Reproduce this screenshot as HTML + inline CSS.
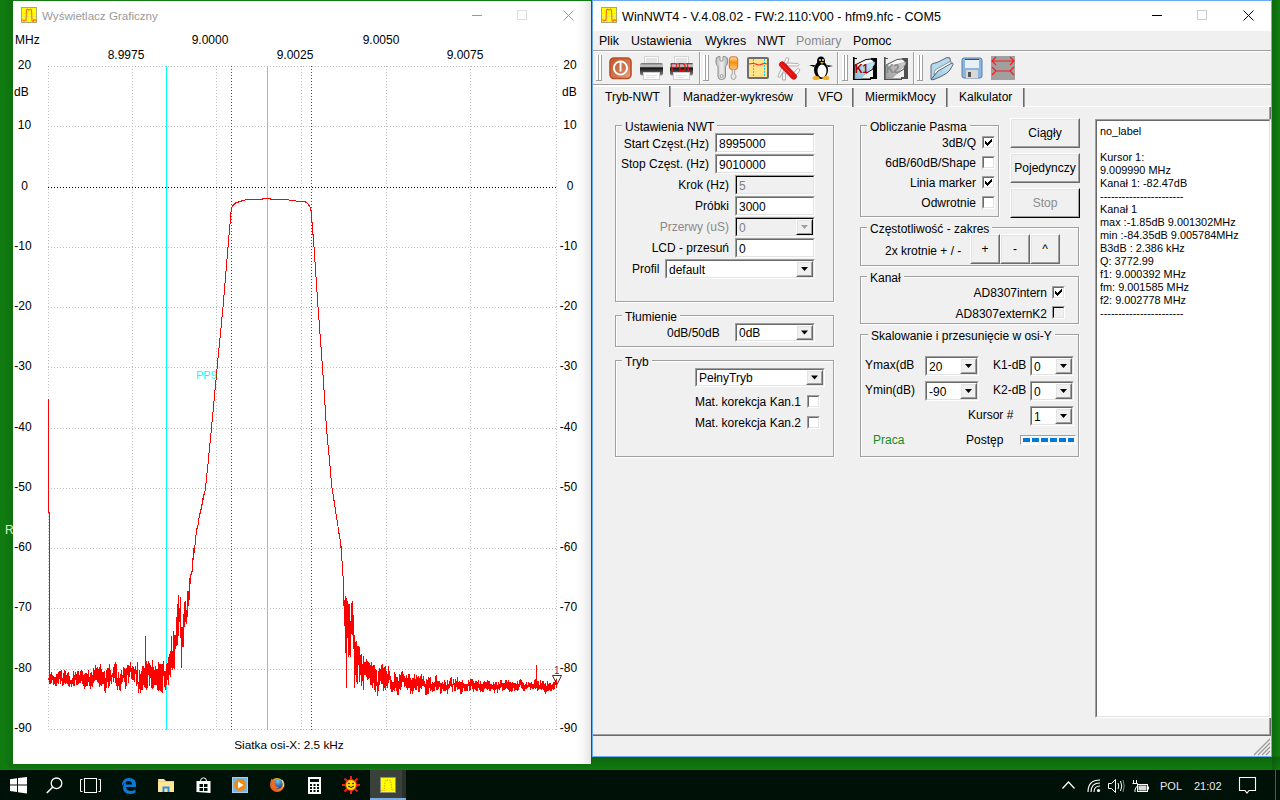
<!DOCTYPE html><html><head><meta charset="utf-8"><style>
html,body{margin:0;padding:0;}
body{width:1280px;height:800px;position:relative;overflow:hidden;background:#107c10;font-family:"Liberation Sans", sans-serif;}
div{box-sizing:border-box;}
svg{position:absolute;overflow:visible;}
</style></head><body><div style="position:absolute;left:4px;top:0px;width:9px;height:764px;background:linear-gradient(to right, rgba(0,0,0,0), rgba(0,0,0,0.10));"></div><div style="position:absolute;left:8px;top:764px;width:583px;height:6px;background:linear-gradient(to bottom, rgba(0,0,0,0.12), rgba(0,0,0,0));"></div><div style="position:absolute;left:13px;top:1px;width:578px;height:763px;background:#fff;"></div><div style="position:absolute;left:575px;top:1px;width:16px;height:763px;background:linear-gradient(to right, rgba(0,0,0,0) 0%, rgba(0,0,0,0.03) 50%, rgba(0,0,0,0.10) 100%);"></div><svg style="left:21px;top:7px" width="16" height="16"><rect x="0.5" y="0.5" width="15" height="15" fill="#ffff00" stroke="#a8a878"/><path d="M1 6.5 H15 M1 9.5 H15 M5.5 1 V15 M10.5 1 V15" stroke="#d8d8a0" stroke-width="0.6"/><path d="M0.5 13.2 L2 12.8 L3 14 L4.2 13 L5 13.2 L5.5 3 L6.5 2.2 L8 3.2 L9.5 2.2 L10.5 3 L11 13.5 L12.3 14.5 L13 12.5 L14.5 13.5 L15.5 12.8" stroke="#ff7010" fill="none" stroke-width="1.1"/></svg><div style="position:absolute;left:42px;top:9.00px;font-size:11.6px;line-height:13.33px;color:#999;white-space:pre;">Wyświetlacz Graficzny</div><div style="position:absolute;left:472px;top:15px;width:10px;height:1px;background:#999;"></div><div style="position:absolute;left:517px;top:10px;width:10px;height:10px;border:1px solid #ddd;"></div><svg style="left:563px;top:10px" width="11" height="11"><path d="M0.5 0.5 L10.5 10.5 M10.5 0.5 L0.5 10.5" stroke="#999" stroke-width="1"/></svg><svg style="left:0;top:0" width="1280" height="800" shape-rendering="crispEdges"><line x1="48" y1="66.5" x2="557" y2="66.5" stroke="#c0c0c0" stroke-dasharray="1 2"/><line x1="48" y1="126.5" x2="557" y2="126.5" stroke="#c0c0c0" stroke-dasharray="1 2"/><line x1="48" y1="187.5" x2="557" y2="187.5" stroke="#000" stroke-dasharray="1 2"/><line x1="48" y1="247.5" x2="557" y2="247.5" stroke="#c0c0c0" stroke-dasharray="1 2"/><line x1="48" y1="307.5" x2="557" y2="307.5" stroke="#c0c0c0" stroke-dasharray="1 2"/><line x1="48" y1="367.5" x2="557" y2="367.5" stroke="#c0c0c0" stroke-dasharray="1 2"/><line x1="48" y1="428.5" x2="557" y2="428.5" stroke="#c0c0c0" stroke-dasharray="1 2"/><line x1="48" y1="488.5" x2="557" y2="488.5" stroke="#c0c0c0" stroke-dasharray="1 2"/><line x1="48" y1="548.5" x2="557" y2="548.5" stroke="#c0c0c0" stroke-dasharray="1 2"/><line x1="48" y1="608.5" x2="557" y2="608.5" stroke="#c0c0c0" stroke-dasharray="1 2"/><line x1="48" y1="669.5" x2="557" y2="669.5" stroke="#c0c0c0" stroke-dasharray="1 2"/><line x1="48" y1="729.5" x2="557" y2="729.5" stroke="#c0c0c0" stroke-dasharray="1 2"/><line x1="48.5" y1="66" x2="48.5" y2="730" stroke="#c0c0c0" stroke-dasharray="1 2"/><line x1="132.5" y1="66" x2="132.5" y2="730" stroke="#c0c0c0" stroke-dasharray="1 2"/><line x1="216.5" y1="66" x2="216.5" y2="730" stroke="#c0c0c0" stroke-dasharray="1 2"/><line x1="301.5" y1="66" x2="301.5" y2="730" stroke="#c0c0c0" stroke-dasharray="1 2"/><line x1="386.5" y1="66" x2="386.5" y2="730" stroke="#c0c0c0" stroke-dasharray="1 2"/><line x1="470.5" y1="66" x2="470.5" y2="730" stroke="#c0c0c0" stroke-dasharray="1 2"/><line x1="556.5" y1="66" x2="556.5" y2="730" stroke="#c0c0c0" stroke-dasharray="1 2"/><line x1="231.5" y1="66" x2="231.5" y2="730" stroke="#ff0000" stroke-dasharray="1 2"/><line x1="311.5" y1="66" x2="311.5" y2="730" stroke="#ff0000" stroke-dasharray="1 2"/><line x1="166.5" y1="66" x2="166.5" y2="730" stroke="#00ffff" stroke-width="1"/><line x1="267.5" y1="66" x2="267.5" y2="730" stroke="#00ffff" stroke-width="1"/><path d="M48.5 399 L48.5 512.5 L49.5 513 L49.5 680 L49.00 679.4 L49.17 682.2 L49.34 679.2 L49.51 678.6 L49.68 676.0 L49.85 678.6 L50.02 683.6 L50.19 680.8 L50.36 683.2 L50.53 680.2 L50.70 680.8 L50.87 680.2 L51.04 673.1 L51.21 683.0 L51.38 681.7 L51.55 681.6 L51.72 673.0 L51.89 672.8 L52.06 675.6 L52.23 677.0 L52.40 679.7 L52.57 678.1 L52.74 680.2 L52.91 675.5 L53.08 679.3 L53.25 679.7 L53.42 675.8 L53.59 685.4 L53.76 681.4 L53.93 684.4 L54.10 677.6 L54.27 677.5 L54.44 679.4 L54.61 680.6 L54.78 683.7 L54.95 682.2 L55.12 679.3 L55.29 677.2 L55.46 678.7 L55.63 685.5 L55.80 677.2 L55.97 681.3 L56.14 682.0 L56.31 674.3 L56.48 680.6 L56.65 685.7 L56.82 673.9 L56.99 679.3 L57.16 680.2 L57.33 677.3 L57.50 682.5 L57.67 679.9 L57.84 673.9 L58.01 682.7 L58.18 681.6 L58.35 682.2 L58.52 683.7 L58.69 678.8 L58.86 677.5 L59.03 671.4 L59.20 679.1 L59.37 674.0 L59.54 674.7 L59.71 671.6 L59.88 673.0 L60.05 675.1 L60.22 682.8 L60.39 670.9 L60.56 671.9 L60.73 678.9 L60.90 683.9 L61.07 680.3 L61.24 670.9 L61.41 670.8 L61.58 679.1 L61.75 674.5 L61.92 673.0 L62.09 681.8 L62.26 682.5 L62.43 678.8 L62.60 679.5 L62.77 680.7 L62.94 685.8 L63.11 682.1 L63.28 681.8 L63.45 682.1 L63.62 673.2 L63.79 685.0 L63.96 683.3 L64.13 681.2 L64.30 671.6 L64.47 675.5 L64.64 681.3 L64.81 670.4 L64.98 676.4 L65.15 681.3 L65.32 671.4 L65.49 683.8 L65.66 679.5 L65.83 676.7 L66.00 678.9 L66.17 680.5 L66.34 678.4 L66.51 682.9 L66.68 675.3 L66.85 676.3 L67.02 682.5 L67.19 678.0 L67.36 674.1 L67.53 681.8 L67.70 684.0 L67.87 676.0 L68.04 672.2 L68.21 677.8 L68.38 678.1 L68.55 678.0 L68.72 685.9 L68.89 675.9 L69.06 686.3 L69.23 675.8 L69.40 678.2 L69.57 684.6 L69.74 686.8 L69.91 685.6 L70.08 683.2 L70.25 682.0 L70.42 681.8 L70.59 683.3 L70.76 679.7 L70.93 681.4 L71.10 682.5 L71.27 679.9 L71.44 683.2 L71.61 682.4 L71.78 687.3 L71.95 681.4 L72.12 678.2 L72.29 678.3 L72.46 679.8 L72.63 683.7 L72.80 677.9 L72.97 680.7 L73.14 685.9 L73.31 670.8 L73.48 672.8 L73.65 678.5 L73.82 679.0 L73.99 678.2 L74.16 675.2 L74.33 680.2 L74.50 678.8 L74.67 675.6 L74.84 685.7 L75.01 680.3 L75.18 676.7 L75.35 679.0 L75.52 678.6 L75.69 679.5 L75.86 672.3 L76.03 677.5 L76.20 684.0 L76.37 674.0 L76.54 678.7 L76.71 683.1 L76.88 682.5 L77.05 685.2 L77.22 671.0 L77.39 677.0 L77.56 677.1 L77.73 681.6 L77.90 683.8 L78.07 671.4 L78.24 683.9 L78.41 672.3 L78.58 681.7 L78.75 671.5 L78.92 678.7 L79.09 682.8 L79.26 676.2 L79.43 677.2 L79.60 679.5 L79.77 676.2 L79.94 674.9 L80.11 682.2 L80.28 680.0 L80.45 674.0 L80.62 683.3 L80.79 670.7 L80.96 680.6 L81.13 675.5 L81.30 677.7 L81.47 680.7 L81.64 678.6 L81.81 680.7 L81.98 670.8 L82.15 670.9 L82.32 680.7 L82.49 673.4 L82.66 673.1 L82.83 671.2 L83.00 684.1 L83.17 681.9 L83.34 685.7 L83.51 674.9 L83.68 679.8 L83.85 674.9 L84.02 684.2 L84.19 688.4 L84.36 677.0 L84.53 688.5 L84.70 685.7 L84.87 680.0 L85.04 672.7 L85.21 686.7 L85.38 679.2 L85.55 676.4 L85.72 680.7 L85.89 680.4 L86.06 685.4 L86.23 673.4 L86.40 683.6 L86.57 685.4 L86.74 685.4 L86.91 677.9 L87.08 675.4 L87.25 683.9 L87.42 679.7 L87.59 679.8 L87.76 685.9 L87.93 677.7 L88.10 670.9 L88.27 676.7 L88.44 670.5 L88.61 682.2 L88.78 679.8 L88.95 675.5 L89.12 678.6 L89.29 682.9 L89.46 679.7 L89.63 686.2 L89.80 680.0 L89.97 685.8 L90.14 688.4 L90.31 689.3 L90.48 678.3 L90.65 685.9 L90.82 673.3 L90.99 675.8 L91.16 672.5 L91.33 685.6 L91.50 673.6 L91.67 679.3 L91.84 678.0 L92.01 678.5 L92.18 675.3 L92.35 679.4 L92.52 686.7 L92.69 678.3 L92.86 680.8 L93.03 683.2 L93.20 676.9 L93.37 671.0 L93.54 674.5 L93.71 682.7 L93.88 667.7 L94.05 672.8 L94.22 680.9 L94.39 679.2 L94.56 674.5 L94.73 678.6 L94.90 674.9 L95.07 667.5 L95.24 665.5 L95.41 671.0 L95.58 680.2 L95.75 672.4 L95.92 671.0 L96.09 672.3 L96.26 668.4 L96.43 676.9 L96.60 671.0 L96.77 680.0 L96.94 668.2 L97.11 679.7 L97.28 673.8 L97.45 667.6 L97.62 681.5 L97.79 675.5 L97.96 667.2 L98.13 671.9 L98.30 679.1 L98.47 674.8 L98.64 682.6 L98.81 682.7 L98.98 682.5 L99.15 680.6 L99.32 686.8 L99.49 682.5 L99.66 680.9 L99.83 667.3 L100.00 682.7 L100.17 684.7 L100.34 674.1 L100.51 672.5 L100.68 685.4 L100.85 664.3 L101.02 677.5 L101.19 685.1 L101.36 669.2 L101.53 679.7 L101.70 686.4 L101.87 675.7 L102.04 680.6 L102.21 683.3 L102.38 672.4 L102.55 677.8 L102.72 680.4 L102.89 683.9 L103.06 678.5 L103.23 677.4 L103.40 672.2 L103.57 676.4 L103.74 684.4 L103.91 679.6 L104.08 673.9 L104.25 674.4 L104.42 690.7 L104.59 687.9 L104.76 685.2 L104.93 671.2 L105.10 686.0 L105.27 685.2 L105.44 692.7 L105.61 684.7 L105.78 681.1 L105.95 684.3 L106.12 669.8 L106.29 686.1 L106.46 680.9 L106.63 673.7 L106.80 685.9 L106.97 687.6 L107.14 667.8 L107.31 672.3 L107.48 678.4 L107.65 677.8 L107.82 674.2 L107.99 670.7 L108.16 687.6 L108.33 683.6 L108.50 669.2 L108.67 668.1 L108.84 687.0 L109.01 682.3 L109.18 686.3 L109.35 680.5 L109.52 669.4 L109.69 676.5 L109.86 664.2 L110.03 670.3 L110.20 675.0 L110.37 679.2 L110.54 671.8 L110.71 676.3 L110.88 680.6 L111.05 680.6 L111.22 682.7 L111.39 680.2 L111.56 676.8 L111.73 683.8 L111.90 678.7 L112.07 672.7 L112.24 673.4 L112.41 676.9 L112.58 675.6 L112.75 676.9 L112.92 675.5 L113.09 676.4 L113.26 674.3 L113.43 667.1 L113.60 678.0 L113.77 682.2 L113.94 678.3 L114.11 674.3 L114.28 678.3 L114.45 669.0 L114.62 664.2 L114.79 675.0 L114.96 668.1 L115.13 678.4 L115.30 666.1 L115.47 662.0 L115.64 665.8 L115.81 682.8 L115.98 670.2 L116.15 664.1 L116.32 668.6 L116.49 677.7 L116.66 678.3 L116.83 677.0 L117.00 686.4 L117.17 682.0 L117.34 677.9 L117.51 682.3 L117.68 689.5 L117.85 685.2 L118.02 685.5 L118.19 671.7 L118.36 677.7 L118.53 683.3 L118.70 676.5 L118.87 685.5 L119.04 682.5 L119.21 684.8 L119.38 677.8 L119.55 690.4 L119.72 688.0 L119.89 678.7 L120.06 680.9 L120.23 691.3 L120.40 677.9 L120.57 685.6 L120.74 685.8 L120.91 678.8 L121.08 670.4 L121.25 678.6 L121.42 679.1 L121.59 683.6 L121.76 680.9 L121.93 675.6 L122.10 681.1 L122.27 679.1 L122.44 677.2 L122.61 676.6 L122.78 675.1 L122.95 681.7 L123.12 670.7 L123.29 673.8 L123.46 678.2 L123.63 668.6 L123.80 675.4 L123.97 667.1 L124.14 673.4 L124.31 681.5 L124.48 681.3 L124.65 677.1 L124.82 676.0 L124.99 668.3 L125.16 689.0 L125.33 681.8 L125.50 686.0 L125.67 673.3 L125.84 678.3 L126.01 668.7 L126.18 685.1 L126.35 686.1 L126.52 668.5 L126.69 678.8 L126.86 682.7 L127.03 666.6 L127.20 665.7 L127.37 668.9 L127.54 671.0 L127.71 665.1 L127.88 674.1 L128.05 675.2 L128.22 677.6 L128.39 678.0 L128.56 683.4 L128.73 681.3 L128.90 664.9 L129.07 670.4 L129.24 666.8 L129.41 666.6 L129.58 673.2 L129.75 673.5 L129.92 676.5 L130.09 662.2 L130.26 664.2 L130.43 672.2 L130.60 671.0 L130.77 670.3 L130.94 672.2 L131.11 667.8 L131.28 678.6 L131.45 676.9 L131.62 674.6 L131.79 671.3 L131.96 675.6 L132.13 665.6 L132.30 670.9 L132.47 678.4 L132.64 667.4 L132.81 679.5 L132.98 678.8 L133.15 667.2 L133.32 675.0 L133.49 674.0 L133.66 679.3 L133.83 680.2 L134.00 675.2 L134.17 669.1 L134.34 674.5 L134.51 675.3 L134.68 681.5 L134.85 678.4 L135.02 670.9 L135.19 666.0 L135.36 673.4 L135.53 670.3 L135.70 667.1 L135.87 674.3 L136.04 670.8 L136.21 674.9 L136.38 677.8 L136.55 670.1 L136.72 686.4 L136.89 670.8 L137.06 682.5 L137.23 675.2 L137.40 684.0 L137.57 662.5 L137.74 670.8 L137.91 679.8 L138.08 683.6 L138.25 693.0 L138.42 682.5 L138.59 690.6 L138.76 686.5 L138.93 687.9 L139.10 684.1 L139.27 678.3 L139.44 683.5 L139.61 670.2 L139.78 688.6 L139.95 670.5 L140.12 681.0 L140.29 692.9 L140.46 677.6 L140.63 679.8 L140.80 689.5 L140.97 680.2 L141.14 673.1 L141.31 681.7 L141.48 683.8 L141.65 684.1 L141.82 670.9 L141.99 690.2 L142.16 689.1 L142.33 674.3 L142.50 675.5 L142.67 669.0 L142.84 683.8 L143.01 665.9 L143.18 677.4 L143.35 667.9 L143.52 666.5 L143.69 678.8 L143.86 684.5 L144.03 673.7 L144.20 668.5 L144.37 681.3 L144.54 674.1 L144.71 677.1 L144.88 687.2 L145.05 683.7 L145.22 669.5 L145.39 687.7 L145.56 673.6 L145.73 680.3 L145.90 668.3 L146.07 673.8 L146.24 660.6 L146.41 689.5 L146.58 687.6 L146.75 666.3 L146.92 664.3 L147.09 663.6 L147.26 687.6 L147.43 673.5 L147.60 676.5 L147.77 673.7 L147.94 674.5 L148.11 665.3 L148.28 674.0 L148.45 660.6 L148.62 671.6 L148.79 674.3 L148.96 675.3 L149.13 669.2 L149.30 663.5 L149.47 673.0 L149.64 667.8 L149.81 685.9 L149.98 679.4 L150.15 672.1 L150.32 669.2 L150.49 667.3 L150.66 665.2 L150.83 670.1 L151.00 675.5 L151.17 677.3 L151.34 677.7 L151.51 687.3 L151.68 666.9 L151.85 673.6 L152.02 688.7 L152.19 660.5 L152.36 671.6 L152.53 678.7 L152.70 679.7 L152.87 683.0 L153.04 678.3 L153.21 684.2 L153.38 681.9 L153.55 688.4 L153.72 666.8 L153.89 673.4 L154.06 680.6 L154.23 671.0 L154.40 670.3 L154.57 684.5 L154.74 672.8 L154.91 683.9 L155.08 684.7 L155.25 680.9 L155.42 682.8 L155.59 677.5 L155.76 666.1 L155.93 678.4 L156.10 682.7 L156.27 673.7 L156.44 677.2 L156.61 684.1 L156.78 668.9 L156.95 681.7 L157.12 690.1 L157.29 669.5 L157.46 675.2 L157.63 672.2 L157.80 687.3 L157.97 676.5 L158.14 682.1 L158.31 668.5 L158.48 675.4 L158.65 676.3 L158.82 662.2 L158.99 691.0 L159.16 686.7 L159.33 664.0 L159.50 685.9 L159.67 678.0 L159.84 683.0 L160.01 681.8 L160.18 664.5 L160.35 675.7 L160.52 690.7 L160.69 671.6 L160.86 667.4 L161.03 664.3 L161.20 665.7 L161.37 680.0 L161.54 692.3 L161.71 681.3 L161.88 679.7 L162.05 692.5 L162.22 672.5 L162.39 670.8 L162.56 681.0 L162.73 680.4 L162.90 665.7 L163.07 663.6 L163.24 675.5 L163.41 674.4 L163.58 660.6 L163.75 669.8 L163.92 666.9 L164.09 675.6 L164.26 671.3 L164.43 672.3 L164.60 670.9 L164.77 683.2 L164.94 686.7 L165.11 673.3 L165.28 683.6 L165.45 671.4 L165.62 678.2 L165.79 683.7 L165.96 689.7 L166.13 674.7 L166.30 676.5 L166.47 678.2 L166.64 664.3 L166.81 676.3 L166.98 670.6 L167.15 679.4 L167.32 667.2 L167.49 662.9 L167.66 677.5 L167.83 679.6 L168.00 672.7 L168.17 684.7 L168.34 673.5 L168.51 669.2 L168.68 677.8 L168.85 656.8 L169.02 663.3 L169.19 667.7 L169.36 674.5 L169.53 662.6 L169.70 665.8 L169.87 654.4 L170.04 663.3 L170.21 677.1 L170.38 651.5 L170.55 676.5 L170.72 651.1 L170.89 658.0 L171.06 659.3 L171.23 668.2 L171.40 642.1 L171.57 636.2 L171.74 660.8 L171.91 661.8 L172.08 658.7 L172.25 669.7 L172.42 652.0 L172.59 651.9 L172.76 659.3 L172.93 652.7 L173.10 667.8 L173.27 634.7 L173.44 645.1 L173.61 630.8 L173.78 659.7 L173.95 646.3 L174.12 661.1 L174.29 669.3 L174.46 649.2 L174.63 645.2 L174.80 641.0 L174.97 635.4 L175.14 636.0 L175.31 648.8 L175.48 640.1 L175.65 638.8 L175.82 634.7 L175.99 646.0 L176.16 639.9 L176.33 631.6 L176.50 639.9 L176.67 629.7 L176.84 617.4 L177.01 645.6 L177.18 633.1 L177.35 615.8 L177.52 636.5 L177.69 626.5 L177.86 603.7 L178.03 636.3 L178.20 620.5 L178.37 624.8 L178.54 615.9 L178.71 611.1 L178.88 595.5 L179.05 621.6 L179.22 611.6 L179.39 608.4 L179.56 614.3 L179.73 611.7 L179.90 616.3 L180.07 607.4 L180.24 609.4 L180.41 597.1 L180.58 608.3 L180.75 624.1 L180.92 638.4 L181.09 626.8 L181.26 635.7 L181.43 658.5 L181.60 632.7 L181.77 644.8 L181.94 654.4 L182.11 635.3 L182.28 647.2 L182.45 627.2 L182.62 635.7 L182.79 632.5 L182.96 633.7 L183.13 642.5 L183.30 646.6 L183.47 622.8 L183.64 622.2 L183.81 630.8 L183.98 614.1 L184.15 627.2 L184.32 626.3 L184.49 616.7 L184.66 623.3 L184.83 602.4 L185.00 624.0 L185.17 601.4 L185.34 609.1 L185.51 610.1 L185.68 611.2 L185.85 622.0 L186.02 614.7 L186.19 610.0 L186.36 617.0 L186.53 624.4 L186.70 610.4 L186.87 612.0 L187.04 617.4 L187.21 608.7 L187.38 596.1 L187.55 616.3 L187.72 615.0 L187.89 591.1 L188.06 601.4 L188.23 603.6 L188.40 606.3 L188.57 603.4 L188.74 596.6 L188.91 590.8 L189.08 596.5 L189.25 600.4 L189.42 586.6 L189.59 585.3 L189.76 589.0 L189.93 578.2 L190.10 583.7 L190.27 580.9 L190.44 583.5 L190.61 576.1 L190.78 573.7 L190.95 574.5 L191.12 574.6 L191.29 570.6 L191.46 572.3 L191.63 574.1 L191.80 574.5 L191.97 574.9 L192.14 564.1 L192.31 564.1 L192.48 558.2 L192.65 568.2 L192.82 558.5 L192.99 559.3 L193.16 559.4 L193.33 552.3 L193.50 556.3 L193.67 553.5 L193.84 547.9 L194.01 551.8 L194.18 552.7 L194.35 544.9 L194.52 549.2 L194.69 546.7 L194.86 545.9 L195.03 544.4 L195.20 544.5 L195.37 540.4 L195.54 540.6 L195.71 537.2 L195.88 537.2 L196.05 533.9 L196.22 533.7 L196.39 534.8 L196.56 532.4 L196.73 530.8 L196.90 528.7 L197.07 528.2 L197.24 528.4 L197.41 528.4 L197.58 526.9 L197.75 526.1 L197.92 524.6 L198.09 525.2 L198.26 522.4 L198.43 521.3 L198.60 521.8 L198.77 520.0 L198.94 518.7 L199.11 517.4 L199.28 516.8 L199.45 516.8 L199.62 515.6 L199.79 513.2 L199.96 514.0 L200.13 513.0 L200.30 511.2 L200.47 512.2 L200.64 510.5 L200.81 509.8 L200.98 510.1 L201.15 509.8 L201.32 507.3 L201.49 507.5 L201.66 505.5 L201.83 507.0 L202.00 504.3 L202.17 504.9 L202.34 502.5 L202.51 502.9 L202.68 502.9 L202.85 499.3 L203.02 499.5 L203.19 499.5 L203.36 498.3 L203.53 497.1 L203.70 498.2 L203.87 496.1 L204.04 494.0 L204.21 495.1 L204.38 492.3 L204.55 493.6 L204.72 491.4 L204.89 491.1 L205.06 491.0 L205.23 489.3 L205.40 487.4 L205.57 486.0 L205.74 486.3 L205.91 484.3 L206.08 481.5 L206.25 481.0 L206.42 479.1 L206.59 477.6 L206.76 474.4 L206.93 473.6 L207.10 472.7 L207.27 470.9 L207.44 469.3 L207.61 466.0 L207.78 465.5 L207.95 464.0 L208.12 463.0 L208.29 459.6 L208.46 458.3 L208.63 456.9 L208.80 455.7 L208.97 453.2 L209.14 452.5 L209.31 449.7 L209.48 448.6 L209.65 446.5 L209.82 445.2 L209.99 443.1 L210.16 440.9 L210.33 440.6 L210.50 438.4 L210.67 436.2 L210.84 434.8 L211.01 433.5 L211.18 430.7 L211.35 429.4 L211.52 427.9 L211.69 426.1 L211.86 423.8 L212.03 421.4 L212.20 420.9 L212.37 418.6 L212.54 416.7 L212.71 414.7 L212.88 413.2 L213.05 411.0 L213.22 408.9 L213.39 407.2 L213.56 405.5 L213.73 403.6 L213.90 401.5 L214.07 400.5 L214.24 397.8 L214.41 396.8 L214.58 394.3 L214.75 393.1 L214.92 391.7 L215.09 389.4 L215.26 387.3 L215.43 385.8 L215.60 384.1 L215.77 381.5 L215.94 380.2 L216.11 378.7 L216.28 376.6 L216.45 375.0 L216.62 373.4 L216.79 371.6 L216.96 369.8 L217.13 367.9 L217.30 365.8 L217.47 364.1 L217.64 362.2 L217.81 360.4 L217.98 358.7 L218.15 356.4 L218.32 355.2 L218.49 353.6 L218.66 351.5 L218.83 350.1 L219.00 348.5 L219.17 346.5 L219.34 345.4 L219.51 342.4 L219.68 341.2 L219.85 338.9 L220.02 338.0 L220.19 336.5 L220.36 333.6 L220.53 332.4 L220.70 330.8 L220.87 328.8 L221.04 327.4 L221.21 324.9 L221.38 324.0 L221.55 322.1 L221.72 320.3 L221.89 318.4 L222.06 317.0 L222.23 315.0 L222.40 313.4 L222.57 311.5 L222.74 309.4 L222.91 308.1 L223.08 306.2 L223.25 304.3 L223.42 301.8 L223.59 300.0 L223.76 298.2 L223.93 296.0 L224.10 294.3 L224.27 292.3 L224.44 289.6 L224.61 287.4 L224.78 286.0 L224.95 284.1 L225.12 281.9 L225.29 279.8 L225.46 277.4 L225.63 275.3 L225.80 273.6 L225.97 271.2 L226.14 268.9 L226.31 267.0 L226.48 265.5 L226.65 263.5 L226.82 260.9 L226.99 258.9 L227.16 257.1 L227.33 254.8 L227.50 253.2 L227.67 250.9 L227.84 248.7 L228.01 247.1 L228.18 244.8 L228.35 243.0 L228.52 241.0 L228.69 238.9 L228.86 237.1 L229.03 235.0 L229.20 232.9 L229.37 230.9 L229.54 229.0 L229.71 227.1 L229.88 225.2 L230.05 223.2 L230.22 221.3 L230.39 219.3 L230.56 217.3 L230.73 215.4 L230.90 213.5 L231.07 211.6 L231.24 209.7 L231.41 208.7 L231.58 208.3 L231.75 208.0 L231.92 207.6 L232.09 207.2 L232.26 206.8 L232.43 206.4 L232.60 206.0 L232.77 205.6 L232.94 205.4 L233.11 205.2 L233.28 205.1 L233.45 204.9 L233.62 204.7 L233.79 204.6 L233.96 204.4 L234.13 204.3 L234.30 204.1 L234.47 204.0 L234.64 203.8 L234.81 203.6 L234.98 203.5 L235.15 203.3 L235.32 203.2 L235.49 203.0 L235.66 202.9 L235.83 202.9 L236.00 202.8 L236.17 202.8 L236.34 202.7 L236.51 202.7 L236.68 202.6 L236.85 202.6 L237.02 202.5 L237.19 202.4 L237.36 202.4 L237.53 202.3 L237.70 202.3 L237.87 202.2 L238.04 202.2 L238.21 202.1 L238.38 202.0 L238.55 202.0 L238.72 201.9 L238.89 201.9 L239.06 201.8 L239.23 201.8 L239.40 201.7 L239.57 201.6 L239.74 201.6 L239.91 201.5 L240.08 201.5 L240.25 201.4 L240.42 201.4 L240.59 201.3 L240.76 201.3 L240.93 201.2 L241.10 201.2 L241.27 201.1 L241.44 201.0 L241.61 201.0 L241.78 200.9 L241.95 200.9 L242.12 200.8 L242.29 200.8 L242.46 200.7 L242.63 200.7 L242.80 200.6 L242.97 200.6 L243.14 200.5 L243.31 200.5 L243.48 200.4 L243.65 200.3 L243.82 200.3 L243.99 200.2 L244.16 200.2 L244.33 200.1 L244.50 200.1 L244.67 200.0 L244.84 200.0 L245.01 199.9 L245.18 199.9 L245.35 199.8 L245.52 199.8 L245.69 199.7 L245.86 199.6 L246.03 199.6 L246.20 199.6 L246.37 199.6 L246.54 199.6 L246.71 199.6 L246.88 199.6 L247.05 199.6 L247.22 199.6 L247.39 199.6 L247.56 199.6 L247.73 199.6 L247.90 199.6 L248.07 199.6 L248.24 199.6 L248.41 199.6 L248.58 199.6 L248.75 199.6 L248.92 199.6 L249.09 199.6 L249.26 199.6 L249.43 199.6 L249.60 199.6 L249.77 199.6 L249.94 199.6 L250.11 199.5 L250.28 199.5 L250.45 199.5 L250.62 199.5 L250.79 199.5 L250.96 199.5 L251.13 199.5 L251.30 199.5 L251.47 199.5 L251.64 199.5 L251.81 199.5 L251.98 199.5 L252.15 199.5 L252.32 199.5 L252.49 199.5 L252.66 199.5 L252.83 199.5 L253.00 199.5 L253.17 199.5 L253.34 199.5 L253.51 199.5 L253.68 199.5 L253.85 199.5 L254.02 199.5 L254.19 199.5 L254.36 199.5 L254.53 199.5 L254.70 199.5 L254.87 199.5 L255.04 199.5 L255.21 199.5 L255.38 199.5 L255.55 199.5 L255.72 199.5 L255.89 199.5 L256.06 199.5 L256.23 199.5 L256.40 199.5 L256.57 199.5 L256.74 199.5 L256.91 199.5 L257.08 199.5 L257.25 199.5 L257.42 199.5 L257.59 199.5 L257.76 199.5 L257.93 199.5 L258.10 199.4 L258.27 199.4 L258.44 199.4 L258.61 199.4 L258.78 199.4 L258.95 199.4 L259.12 199.4 L259.29 199.4 L259.46 199.4 L259.63 199.4 L259.80 199.4 L259.97 199.4 L260.14 199.4 L260.31 199.4 L260.48 199.4 L260.65 199.4 L260.82 199.4 L260.99 199.4 L261.16 199.4 L261.33 199.4 L261.50 199.4 L261.67 199.4 L261.84 199.4 L262.01 199.4 L262.18 199.2 L262.35 199.1 L262.52 198.9 L262.69 198.7 L262.86 198.5 L263.03 198.4 L263.20 198.4 L263.37 198.4 L263.54 198.4 L263.71 198.4 L263.88 198.4 L264.05 198.4 L264.22 198.4 L264.39 198.4 L264.56 198.4 L264.73 198.4 L264.90 198.4 L265.07 198.4 L265.24 198.4 L265.41 198.4 L265.58 198.4 L265.75 198.4 L265.92 198.4 L266.09 198.4 L266.26 198.4 L266.43 198.4 L266.60 198.4 L266.77 198.4 L266.94 198.4 L267.11 198.4 L267.28 198.4 L267.45 198.4 L267.62 198.4 L267.79 198.4 L267.96 198.4 L268.13 198.4 L268.30 198.4 L268.47 198.4 L268.64 198.4 L268.81 198.4 L268.98 198.4 L269.15 198.4 L269.32 198.4 L269.49 198.4 L269.66 198.4 L269.83 198.4 L270.00 198.4 L270.17 198.6 L270.34 198.7 L270.51 198.9 L270.68 199.1 L270.85 199.2 L271.02 199.4 L271.19 199.4 L271.36 199.4 L271.53 199.4 L271.70 199.4 L271.87 199.4 L272.04 199.4 L272.21 199.4 L272.38 199.4 L272.55 199.4 L272.72 199.4 L272.89 199.4 L273.06 199.4 L273.23 199.4 L273.40 199.4 L273.57 199.4 L273.74 199.4 L273.91 199.4 L274.08 199.4 L274.25 199.4 L274.42 199.4 L274.59 199.4 L274.76 199.4 L274.93 199.4 L275.10 199.4 L275.27 199.4 L275.44 199.4 L275.61 199.4 L275.78 199.4 L275.95 199.4 L276.12 199.4 L276.29 199.4 L276.46 199.4 L276.63 199.4 L276.80 199.4 L276.97 199.4 L277.14 199.4 L277.31 199.4 L277.48 199.4 L277.65 199.4 L277.82 199.4 L277.99 199.4 L278.16 199.4 L278.33 199.4 L278.50 199.4 L278.67 199.4 L278.84 199.4 L279.01 199.4 L279.18 199.4 L279.35 199.4 L279.52 199.4 L279.69 199.4 L279.86 199.4 L280.03 199.4 L280.20 199.4 L280.37 199.4 L280.54 199.4 L280.71 199.4 L280.88 199.4 L281.05 199.4 L281.22 199.4 L281.39 199.4 L281.56 199.4 L281.73 199.4 L281.90 199.4 L282.07 199.4 L282.24 199.4 L282.41 199.4 L282.58 199.4 L282.75 199.4 L282.92 199.4 L283.09 199.4 L283.26 199.4 L283.43 199.4 L283.60 199.4 L283.77 199.4 L283.94 199.4 L284.11 199.4 L284.28 199.4 L284.45 199.4 L284.62 199.4 L284.79 199.4 L284.96 199.4 L285.13 199.4 L285.30 199.4 L285.47 199.4 L285.64 199.4 L285.81 199.4 L285.98 199.4 L286.15 199.4 L286.32 199.4 L286.49 199.4 L286.66 199.4 L286.83 199.4 L287.00 199.4 L287.17 199.4 L287.34 199.4 L287.51 199.4 L287.68 199.4 L287.85 199.4 L288.02 199.4 L288.19 199.5 L288.36 199.6 L288.53 199.7 L288.70 199.7 L288.87 199.8 L289.04 199.9 L289.21 200.0 L289.38 200.1 L289.55 200.2 L289.72 200.3 L289.89 200.3 L290.06 200.4 L290.23 200.4 L290.40 200.4 L290.57 200.4 L290.74 200.4 L290.91 200.4 L291.08 200.4 L291.25 200.4 L291.42 200.5 L291.59 200.5 L291.76 200.5 L291.93 200.5 L292.10 200.5 L292.27 200.5 L292.44 200.5 L292.61 200.5 L292.78 200.5 L292.95 200.5 L293.12 200.5 L293.29 200.5 L293.46 200.5 L293.63 200.5 L293.80 200.6 L293.97 200.6 L294.14 200.6 L294.31 200.6 L294.48 200.6 L294.65 200.6 L294.82 200.6 L294.99 200.6 L295.16 200.7 L295.33 200.7 L295.50 200.8 L295.67 200.9 L295.84 201.0 L296.01 201.1 L296.18 201.1 L296.35 201.2 L296.52 201.3 L296.69 201.4 L296.86 201.4 L297.03 201.5 L297.20 201.5 L297.37 201.5 L297.54 201.5 L297.71 201.5 L297.88 201.5 L298.05 201.5 L298.22 201.5 L298.39 201.5 L298.56 201.5 L298.73 201.5 L298.90 201.5 L299.07 201.5 L299.24 201.5 L299.41 201.5 L299.58 201.5 L299.75 201.5 L299.92 201.5 L300.09 201.5 L300.26 201.5 L300.43 201.5 L300.60 201.5 L300.77 201.5 L300.94 201.5 L301.11 201.6 L301.28 201.6 L301.45 201.6 L301.62 201.6 L301.79 201.6 L301.96 201.6 L302.13 201.6 L302.30 201.6 L302.47 201.6 L302.64 201.6 L302.81 201.6 L302.98 201.6 L303.15 201.6 L303.32 201.6 L303.49 201.6 L303.66 201.6 L303.83 201.6 L304.00 201.6 L304.17 201.6 L304.34 201.6 L304.51 201.6 L304.68 201.6 L304.85 201.6 L305.02 201.6 L305.19 201.8 L305.36 201.9 L305.53 202.0 L305.70 202.2 L305.87 202.3 L306.04 202.4 L306.21 202.6 L306.38 202.7 L306.55 202.8 L306.72 203.0 L306.89 203.1 L307.06 203.2 L307.23 203.4 L307.40 203.5 L307.57 203.7 L307.74 203.8 L307.91 203.9 L308.08 204.1 L308.25 204.4 L308.42 204.7 L308.59 204.9 L308.76 205.2 L308.93 205.5 L309.10 205.8 L309.27 206.0 L309.44 206.3 L309.61 206.6 L309.78 206.8 L309.95 207.1 L310.12 207.4 L310.29 207.7 L310.46 207.9 L310.63 208.8 L310.80 209.9 L310.97 210.9 L311.14 212.0 L311.31 213.1 L311.48 215.3 L311.65 217.5 L311.82 219.7 L311.99 221.9 L312.16 224.0 L312.33 226.1 L312.50 228.3 L312.67 230.3 L312.84 232.4 L313.01 234.5 L313.18 236.9 L313.35 238.8 L313.52 240.8 L313.69 243.0 L313.86 245.2 L314.03 247.2 L314.20 250.0 L314.37 252.5 L314.54 255.1 L314.71 257.5 L314.88 260.3 L315.05 262.7 L315.22 265.4 L315.39 267.9 L315.56 270.5 L315.73 272.5 L315.90 275.3 L316.07 277.8 L316.24 280.7 L316.41 282.6 L316.58 285.4 L316.75 288.0 L316.92 290.6 L317.09 293.5 L317.26 295.6 L317.43 298.6 L317.60 300.5 L317.77 303.0 L317.94 306.3 L318.11 308.5 L318.28 310.7 L318.45 312.9 L318.62 315.3 L318.79 317.0 L318.96 319.9 L319.13 321.7 L319.30 324.5 L319.47 326.5 L319.64 328.2 L319.81 330.6 L319.98 333.7 L320.15 335.6 L320.32 337.8 L320.49 340.4 L320.66 342.4 L320.83 344.7 L321.00 347.2 L321.17 349.5 L321.34 352.2 L321.51 354.0 L321.68 356.8 L321.85 359.0 L322.02 361.3 L322.19 363.3 L322.36 365.2 L322.53 367.5 L322.70 370.0 L322.87 372.4 L323.04 375.3 L323.21 377.6 L323.38 381.2 L323.55 383.3 L323.72 385.5 L323.89 387.6 L324.06 390.8 L324.23 393.3 L324.40 395.5 L324.57 398.1 L324.74 400.4 L324.91 403.9 L325.08 406.2 L325.25 409.6 L325.42 411.4 L325.59 414.0 L325.76 417.3 L325.93 419.4 L326.10 422.0 L326.27 424.4 L326.44 426.9 L326.61 430.1 L326.78 431.8 L326.95 434.0 L327.12 434.9 L327.29 436.9 L327.46 438.3 L327.63 441.0 L327.80 441.7 L327.97 444.5 L328.14 446.6 L328.31 448.6 L328.48 449.3 L328.65 452.2 L328.82 453.1 L328.99 454.9 L329.16 456.5 L329.33 459.7 L329.50 461.8 L329.67 462.5 L329.84 464.2 L330.01 466.2 L330.18 469.1 L330.35 470.6 L330.52 471.5 L330.69 472.7 L330.86 475.0 L331.03 477.8 L331.20 479.9 L331.37 480.6 L331.54 482.2 L331.71 484.2 L331.88 485.4 L332.05 488.5 L332.22 488.5 L332.39 490.9 L332.56 490.4 L332.73 491.7 L332.90 493.8 L333.07 494.2 L333.24 496.3 L333.41 496.9 L333.58 497.2 L333.75 499.4 L333.92 500.6 L334.09 500.1 L334.26 503.3 L334.43 503.7 L334.60 505.0 L334.77 504.6 L334.94 506.3 L335.11 507.7 L335.28 509.8 L335.45 509.2 L335.62 510.7 L335.79 511.3 L335.96 513.3 L336.13 514.8 L336.30 514.4 L336.47 516.2 L336.64 518.0 L336.81 519.8 L336.98 520.2 L337.15 520.5 L337.32 521.0 L337.49 522.2 L337.66 523.6 L337.83 525.4 L338.00 526.4 L338.17 529.0 L338.34 529.0 L338.51 529.0 L338.68 532.5 L338.85 533.1 L339.02 533.5 L339.19 533.8 L339.36 534.0 L339.53 535.7 L339.70 538.7 L339.87 538.1 L340.04 538.7 L340.21 541.5 L340.38 542.7 L340.55 544.3 L340.72 545.6 L340.89 547.8 L341.06 546.5 L341.23 549.9 L341.40 548.8 L341.57 552.9 L341.74 555.4 L341.91 558.6 L342.08 562.8 L342.25 564.3 L342.42 569.2 L342.59 571.8 L342.76 573.3 L342.93 574.8 L343.10 577.2 L343.27 580.5 L343.44 584.1 L343.61 588.7 L343.78 602.1 L343.95 602.9 L344.12 610.0 L344.29 600.3 L344.46 605.6 L344.63 614.2 L344.80 625.5 L344.97 610.0 L345.14 652.6 L345.31 616.0 L345.48 641.2 L345.65 595.9 L345.82 621.4 L345.99 625.1 L346.16 623.4 L346.33 629.9 L346.50 625.4 L346.67 624.6 L346.84 597.7 L347.01 614.1 L347.18 601.1 L347.35 637.7 L347.52 634.1 L347.69 627.5 L347.86 618.7 L348.03 622.7 L348.20 656.8 L348.37 656.4 L348.54 629.7 L348.71 649.4 L348.88 605.4 L349.05 603.8 L349.22 621.3 L349.39 615.4 L349.56 620.4 L349.73 631.9 L349.90 654.5 L350.07 620.6 L350.24 632.1 L350.41 636.2 L350.58 632.1 L350.75 646.5 L350.92 657.0 L351.09 613.6 L351.26 633.4 L351.43 626.1 L351.60 634.2 L351.77 605.7 L351.94 603.0 L352.11 602.7 L352.28 634.6 L352.45 630.2 L352.62 629.4 L352.79 605.6 L352.96 625.9 L353.13 622.4 L353.30 615.0 L353.47 624.1 L353.64 648.8 L353.81 648.2 L353.98 641.5 L354.15 650.0 L354.32 635.2 L354.49 645.4 L354.66 645.6 L354.83 653.5 L355.00 645.8 L355.17 645.9 L355.34 647.5 L355.51 642.2 L355.68 675.4 L355.85 661.8 L356.02 662.6 L356.19 680.8 L356.36 678.6 L356.53 640.6 L356.70 671.1 L356.87 673.3 L357.04 683.9 L357.21 678.9 L357.38 671.2 L357.55 645.7 L357.72 648.8 L357.89 662.5 L358.06 664.8 L358.23 645.6 L358.40 653.5 L358.57 653.7 L358.74 659.9 L358.91 664.0 L359.08 657.4 L359.25 647.1 L359.42 677.3 L359.59 682.1 L359.76 662.7 L359.93 676.2 L360.10 669.5 L360.27 671.8 L360.44 669.5 L360.61 655.2 L360.78 670.2 L360.95 675.1 L361.12 654.2 L361.29 683.1 L361.46 683.8 L361.63 684.8 L361.80 685.9 L361.97 677.2 L362.14 666.9 L362.31 665.3 L362.48 664.1 L362.65 674.6 L362.82 673.5 L362.99 680.8 L363.16 656.5 L363.33 690.3 L363.50 689.5 L363.67 671.6 L363.84 677.9 L364.01 675.3 L364.18 672.8 L364.35 667.7 L364.52 668.5 L364.69 661.7 L364.86 671.7 L365.03 670.0 L365.20 673.3 L365.37 662.2 L365.54 670.6 L365.71 670.4 L365.88 675.2 L366.05 658.9 L366.22 672.1 L366.39 676.6 L366.56 672.3 L366.73 662.7 L366.90 661.1 L367.07 663.2 L367.24 672.1 L367.41 680.0 L367.58 665.0 L367.75 661.4 L367.92 671.7 L368.09 671.2 L368.26 662.3 L368.43 664.9 L368.60 671.4 L368.77 679.0 L368.94 662.9 L369.11 664.7 L369.28 678.1 L369.45 663.0 L369.62 674.5 L369.79 676.5 L369.96 672.4 L370.13 664.7 L370.30 673.1 L370.47 671.1 L370.64 677.3 L370.81 667.8 L370.98 684.7 L371.15 662.0 L371.32 675.0 L371.49 676.8 L371.66 684.8 L371.83 671.6 L372.00 680.8 L372.17 671.1 L372.34 681.1 L372.51 688.0 L372.68 670.5 L372.85 676.8 L373.02 665.4 L373.19 680.5 L373.36 682.5 L373.53 673.4 L373.70 664.7 L373.87 677.6 L374.04 684.2 L374.21 684.6 L374.38 683.2 L374.55 664.6 L374.72 672.9 L374.89 689.5 L375.06 669.4 L375.23 687.6 L375.40 691.7 L375.57 684.7 L375.74 687.5 L375.91 676.5 L376.08 669.8 L376.25 678.7 L376.42 678.4 L376.59 680.1 L376.76 686.4 L376.93 680.7 L377.10 683.9 L377.27 686.1 L377.44 683.2 L377.61 695.9 L377.78 686.7 L377.95 683.6 L378.12 680.9 L378.29 677.1 L378.46 690.9 L378.63 681.2 L378.80 671.2 L378.97 674.3 L379.14 676.8 L379.31 674.1 L379.48 685.2 L379.65 668.5 L379.82 680.8 L379.99 678.3 L380.16 668.8 L380.33 678.0 L380.50 677.0 L380.67 681.4 L380.84 674.3 L381.01 679.6 L381.18 664.9 L381.35 668.8 L381.52 682.1 L381.69 683.6 L381.86 675.8 L382.03 671.5 L382.20 683.8 L382.37 664.3 L382.54 671.1 L382.71 682.4 L382.88 683.0 L383.05 671.6 L383.22 667.8 L383.39 690.7 L383.56 681.9 L383.73 674.6 L383.90 681.5 L384.07 687.3 L384.24 668.7 L384.41 687.9 L384.58 684.8 L384.75 667.3 L384.92 684.0 L385.09 666.4 L385.26 685.9 L385.43 680.6 L385.60 689.5 L385.77 673.7 L385.94 678.1 L386.11 685.6 L386.28 674.0 L386.45 673.6 L386.62 675.9 L386.79 677.8 L386.96 670.6 L387.13 681.0 L387.30 681.0 L387.47 677.3 L387.64 687.9 L387.81 673.9 L387.98 685.0 L388.15 672.5 L388.32 681.7 L388.49 665.7 L388.66 679.1 L388.83 677.4 L389.00 676.2 L389.17 676.3 L389.34 678.9 L389.51 677.2 L389.68 671.4 L389.85 679.1 L390.02 679.7 L390.19 679.9 L390.36 676.4 L390.53 682.4 L390.70 688.5 L390.87 681.5 L391.04 679.9 L391.21 692.2 L391.38 689.9 L391.55 689.8 L391.72 691.7 L391.89 682.3 L392.06 683.9 L392.23 692.3 L392.40 681.6 L392.57 684.4 L392.74 687.4 L392.91 687.0 L393.08 682.3 L393.25 689.7 L393.42 681.6 L393.59 686.7 L393.76 688.3 L393.93 685.2 L394.10 685.3 L394.27 673.2 L394.44 672.3 L394.61 676.9 L394.78 684.1 L394.95 690.9 L395.12 674.4 L395.29 684.4 L395.46 677.6 L395.63 678.7 L395.80 681.7 L395.97 687.7 L396.14 684.7 L396.31 690.5 L396.48 677.1 L396.65 688.3 L396.82 688.5 L396.99 683.3 L397.16 685.8 L397.33 679.8 L397.50 676.9 L397.67 681.4 L397.84 680.4 L398.01 694.6 L398.18 682.1 L398.35 695.0 L398.52 686.5 L398.69 687.0 L398.86 689.3 L399.03 679.9 L399.20 689.2 L399.37 685.4 L399.54 673.7 L399.71 685.3 L399.88 684.4 L400.05 683.3 L400.22 689.5 L400.39 677.7 L400.56 683.0 L400.73 684.4 L400.90 675.1 L401.07 687.2 L401.24 672.3 L401.41 673.3 L401.58 683.7 L401.75 674.6 L401.92 680.0 L402.09 671.2 L402.26 680.7 L402.43 673.7 L402.60 681.8 L402.77 671.2 L402.94 682.4 L403.11 678.6 L403.28 680.8 L403.45 680.5 L403.62 682.2 L403.79 674.8 L403.96 673.6 L404.13 683.7 L404.30 678.9 L404.47 682.1 L404.64 687.3 L404.81 675.9 L404.98 680.9 L405.15 681.6 L405.32 678.9 L405.49 686.2 L405.66 683.3 L405.83 679.3 L406.00 678.1 L406.17 687.8 L406.34 679.7 L406.51 686.6 L406.68 686.0 L406.85 674.7 L407.02 678.0 L407.19 684.1 L407.36 686.0 L407.53 688.4 L407.70 688.4 L407.87 689.5 L408.04 681.6 L408.21 682.1 L408.38 687.1 L408.55 680.3 L408.72 688.0 L408.89 673.7 L409.06 685.7 L409.23 681.4 L409.40 673.8 L409.57 688.3 L409.74 685.3 L409.91 684.4 L410.08 679.2 L410.25 683.0 L410.42 693.9 L410.59 682.0 L410.76 677.9 L410.93 682.2 L411.10 680.4 L411.27 685.9 L411.44 684.4 L411.61 681.5 L411.78 681.6 L411.95 691.3 L412.12 678.3 L412.29 694.4 L412.46 683.1 L412.63 680.4 L412.80 690.2 L412.97 689.2 L413.14 681.0 L413.31 690.2 L413.48 677.7 L413.65 681.3 L413.82 691.3 L413.99 683.8 L414.16 677.9 L414.33 686.5 L414.50 687.8 L414.67 682.5 L414.84 673.7 L415.01 680.0 L415.18 683.6 L415.35 685.3 L415.52 689.8 L415.69 680.4 L415.86 679.5 L416.03 682.1 L416.20 688.6 L416.37 678.2 L416.54 689.6 L416.71 674.9 L416.88 687.2 L417.05 679.9 L417.22 685.4 L417.39 686.4 L417.56 677.1 L417.73 682.4 L417.90 684.0 L418.07 685.8 L418.24 678.6 L418.41 678.5 L418.58 675.6 L418.75 692.2 L418.92 683.6 L419.09 683.8 L419.26 677.9 L419.43 689.8 L419.60 682.8 L419.77 692.1 L419.94 689.1 L420.11 684.7 L420.28 687.6 L420.45 678.4 L420.62 681.6 L420.79 680.0 L420.96 676.4 L421.13 682.3 L421.30 681.4 L421.47 688.9 L421.64 674.4 L421.81 679.3 L421.98 678.4 L422.15 680.8 L422.32 685.2 L422.49 685.3 L422.66 683.6 L422.83 681.3 L423.00 685.8 L423.17 685.1 L423.34 675.6 L423.51 682.0 L423.68 676.9 L423.85 677.9 L424.02 684.2 L424.19 684.1 L424.36 684.7 L424.53 680.7 L424.70 684.4 L424.87 681.7 L425.04 688.2 L425.21 690.1 L425.38 695.0 L425.55 693.4 L425.72 684.2 L425.89 685.8 L426.06 683.5 L426.23 688.9 L426.40 694.7 L426.57 690.1 L426.74 679.2 L426.91 680.8 L427.08 680.4 L427.25 688.4 L427.42 686.0 L427.59 687.4 L427.76 693.5 L427.93 682.5 L428.10 682.5 L428.27 693.6 L428.44 687.7 L428.61 682.6 L428.78 678.5 L428.95 678.8 L429.12 677.8 L429.29 685.0 L429.46 684.5 L429.63 688.3 L429.80 683.2 L429.97 680.7 L430.14 680.5 L430.31 691.0 L430.48 676.8 L430.65 685.1 L430.82 684.9 L430.99 687.8 L431.16 683.8 L431.33 688.0 L431.50 689.6 L431.67 685.7 L431.84 684.4 L432.01 685.5 L432.18 682.0 L432.35 685.0 L432.52 684.4 L432.69 686.4 L432.86 691.0 L433.03 690.8 L433.20 683.3 L433.37 687.7 L433.54 686.5 L433.71 688.6 L433.88 685.6 L434.05 686.7 L434.22 683.6 L434.39 682.2 L434.56 689.0 L434.73 690.5 L434.90 687.5 L435.07 686.0 L435.24 684.8 L435.41 681.3 L435.58 675.7 L435.75 685.2 L435.92 682.9 L436.09 679.6 L436.26 677.9 L436.43 687.4 L436.60 675.2 L436.77 689.5 L436.94 685.5 L437.11 690.2 L437.28 680.6 L437.45 683.7 L437.62 681.9 L437.79 684.8 L437.96 683.4 L438.13 681.2 L438.30 688.8 L438.47 681.0 L438.64 682.2 L438.81 686.7 L438.98 682.3 L439.15 682.9 L439.32 686.5 L439.49 683.9 L439.66 680.7 L439.83 685.8 L440.00 685.7 L440.17 693.8 L440.34 682.7 L440.51 691.3 L440.68 684.0 L440.85 685.6 L441.02 685.5 L441.19 687.6 L441.36 689.7 L441.53 692.6 L441.70 682.8 L441.87 690.6 L442.04 689.0 L442.21 688.1 L442.38 681.7 L442.55 688.6 L442.72 684.6 L442.89 686.7 L443.06 684.3 L443.23 688.3 L443.40 690.2 L443.57 690.3 L443.74 684.9 L443.91 689.7 L444.08 691.4 L444.25 681.6 L444.42 691.2 L444.59 679.8 L444.76 687.3 L444.93 687.6 L445.10 691.3 L445.27 686.7 L445.44 684.0 L445.61 683.2 L445.78 681.8 L445.95 690.3 L446.12 686.6 L446.29 685.0 L446.46 690.2 L446.63 685.1 L446.80 686.3 L446.97 686.0 L447.14 694.2 L447.31 693.1 L447.48 686.3 L447.65 680.3 L447.82 687.3 L447.99 686.2 L448.16 687.1 L448.33 687.8 L448.50 684.2 L448.67 689.2 L448.84 688.8 L449.01 686.3 L449.18 683.8 L449.35 683.4 L449.52 687.9 L449.69 680.6 L449.86 684.0 L450.03 681.3 L450.20 678.4 L450.37 685.8 L450.54 683.0 L450.71 683.0 L450.88 686.2 L451.05 676.9 L451.22 682.6 L451.39 684.2 L451.56 686.6 L451.73 679.5 L451.90 686.9 L452.07 685.4 L452.24 690.2 L452.41 689.6 L452.58 687.5 L452.75 692.0 L452.92 685.5 L453.09 683.8 L453.26 684.0 L453.43 681.6 L453.60 685.0 L453.77 678.6 L453.94 684.7 L454.11 686.7 L454.28 688.9 L454.45 683.9 L454.62 690.8 L454.79 683.1 L454.96 685.3 L455.13 679.5 L455.30 683.0 L455.47 682.9 L455.64 691.4 L455.81 687.5 L455.98 681.1 L456.15 686.9 L456.32 686.3 L456.49 683.3 L456.66 684.0 L456.83 682.5 L457.00 681.6 L457.17 677.3 L457.34 683.4 L457.51 688.7 L457.68 689.6 L457.85 683.6 L458.02 682.2 L458.19 684.6 L458.36 689.0 L458.53 687.2 L458.70 683.9 L458.87 687.5 L459.04 685.4 L459.21 688.1 L459.38 684.7 L459.55 680.8 L459.72 686.5 L459.89 689.1 L460.06 682.5 L460.23 686.4 L460.40 690.3 L460.57 686.0 L460.74 685.4 L460.91 694.3 L461.08 691.3 L461.25 692.2 L461.42 685.1 L461.59 694.4 L461.76 682.3 L461.93 686.1 L462.10 690.3 L462.27 692.0 L462.44 683.4 L462.61 684.0 L462.78 686.7 L462.95 679.6 L463.12 687.8 L463.29 687.4 L463.46 683.8 L463.63 687.4 L463.80 688.3 L463.97 686.7 L464.14 687.5 L464.31 691.1 L464.48 684.0 L464.65 686.2 L464.82 683.6 L464.99 689.0 L465.16 683.7 L465.33 686.6 L465.50 685.2 L465.67 684.9 L465.84 690.7 L466.01 684.4 L466.18 689.8 L466.35 688.0 L466.52 690.0 L466.69 685.2 L466.86 689.4 L467.03 689.1 L467.20 684.5 L467.37 687.8 L467.54 686.5 L467.71 686.7 L467.88 691.2 L468.05 684.0 L468.22 680.4 L468.39 679.9 L468.56 684.0 L468.73 683.1 L468.90 685.1 L469.07 686.9 L469.24 690.8 L469.41 685.9 L469.58 686.4 L469.75 682.3 L469.92 686.9 L470.09 689.6 L470.26 689.5 L470.43 678.9 L470.60 687.7 L470.77 689.9 L470.94 687.1 L471.11 678.9 L471.28 682.7 L471.45 685.5 L471.62 684.8 L471.79 680.5 L471.96 680.3 L472.13 686.8 L472.30 679.2 L472.47 688.9 L472.64 684.6 L472.81 685.9 L472.98 680.9 L473.15 683.8 L473.32 688.5 L473.49 681.5 L473.66 692.4 L473.83 682.0 L474.00 682.6 L474.17 686.8 L474.34 688.2 L474.51 689.0 L474.68 685.3 L474.85 685.9 L475.02 685.8 L475.19 684.8 L475.36 681.1 L475.53 690.2 L475.70 688.1 L475.87 688.0 L476.04 685.5 L476.21 688.4 L476.38 687.6 L476.55 687.2 L476.72 690.9 L476.89 681.3 L477.06 687.5 L477.23 682.8 L477.40 684.9 L477.57 690.6 L477.74 681.9 L477.91 685.0 L478.08 683.3 L478.25 688.4 L478.42 682.2 L478.59 680.2 L478.76 687.6 L478.93 685.0 L479.10 685.4 L479.27 690.1 L479.44 683.9 L479.61 685.7 L479.78 687.4 L479.95 688.2 L480.12 685.1 L480.29 690.0 L480.46 692.2 L480.63 685.3 L480.80 692.2 L480.97 681.0 L481.14 691.3 L481.31 685.8 L481.48 687.6 L481.65 686.3 L481.82 685.5 L481.99 683.6 L482.16 686.6 L482.33 692.0 L482.50 691.4 L482.67 686.4 L482.84 685.6 L483.01 684.6 L483.18 682.6 L483.35 691.6 L483.52 687.8 L483.69 685.6 L483.86 683.4 L484.03 681.5 L484.20 688.8 L484.37 687.0 L484.54 681.5 L484.71 687.8 L484.88 681.1 L485.05 686.8 L485.22 681.7 L485.39 683.5 L485.56 686.3 L485.73 686.0 L485.90 687.7 L486.07 681.7 L486.24 689.2 L486.41 688.4 L486.58 684.0 L486.75 685.5 L486.92 681.7 L487.09 683.8 L487.26 680.4 L487.43 685.2 L487.60 685.9 L487.77 690.0 L487.94 689.1 L488.11 689.0 L488.28 685.5 L488.45 686.0 L488.62 685.7 L488.79 687.5 L488.96 681.1 L489.13 688.9 L489.30 681.3 L489.47 684.4 L489.64 685.9 L489.81 684.1 L489.98 690.9 L490.15 685.3 L490.32 690.6 L490.49 689.4 L490.66 684.2 L490.83 687.2 L491.00 690.1 L491.17 685.0 L491.34 686.3 L491.51 684.2 L491.68 686.0 L491.85 684.5 L492.02 685.7 L492.19 688.4 L492.36 689.4 L492.53 685.3 L492.70 685.5 L492.87 687.6 L493.04 684.1 L493.21 681.9 L493.38 689.0 L493.55 682.9 L493.72 689.2 L493.89 683.6 L494.06 692.5 L494.23 684.1 L494.40 690.3 L494.57 692.5 L494.74 684.8 L494.91 692.5 L495.08 685.2 L495.25 682.2 L495.42 689.8 L495.59 689.7 L495.76 686.8 L495.93 681.9 L496.10 687.2 L496.27 686.5 L496.44 686.4 L496.61 686.8 L496.78 682.3 L496.95 686.1 L497.12 693.2 L497.29 692.6 L497.46 686.4 L497.63 685.1 L497.80 688.2 L497.97 689.9 L498.14 688.4 L498.31 682.1 L498.48 685.9 L498.65 685.5 L498.82 689.3 L498.99 688.4 L499.16 686.3 L499.33 688.5 L499.50 683.6 L499.67 689.8 L499.84 683.9 L500.01 686.7 L500.18 688.4 L500.35 682.9 L500.52 683.6 L500.69 680.4 L500.86 686.2 L501.03 685.4 L501.20 684.5 L501.37 687.0 L501.54 680.0 L501.71 685.3 L501.88 685.7 L502.05 684.7 L502.22 688.1 L502.39 691.2 L502.56 684.7 L502.73 683.4 L502.90 684.7 L503.07 687.0 L503.24 688.5 L503.41 684.0 L503.58 689.7 L503.75 683.2 L503.92 688.6 L504.09 687.0 L504.26 686.8 L504.43 690.4 L504.60 683.9 L504.77 684.0 L504.94 685.8 L505.11 686.9 L505.28 680.1 L505.45 685.2 L505.62 682.1 L505.79 686.5 L505.96 688.9 L506.13 685.0 L506.30 684.6 L506.47 685.5 L506.64 679.6 L506.81 687.3 L506.98 686.6 L507.15 685.3 L507.32 683.5 L507.49 682.5 L507.66 684.2 L507.83 688.6 L508.00 684.8 L508.17 689.5 L508.34 680.5 L508.51 684.8 L508.68 687.4 L508.85 687.0 L509.02 682.3 L509.19 685.6 L509.36 691.6 L509.53 684.0 L509.70 684.9 L509.87 684.5 L510.04 686.0 L510.21 689.4 L510.38 689.1 L510.55 681.8 L510.72 691.4 L510.89 685.0 L511.06 685.0 L511.23 691.8 L511.40 686.5 L511.57 683.1 L511.74 685.0 L511.91 684.8 L512.08 683.9 L512.25 685.9 L512.42 689.5 L512.59 687.7 L512.76 682.3 L512.93 691.4 L513.10 682.9 L513.27 686.0 L513.44 685.5 L513.61 687.6 L513.78 684.3 L513.95 686.7 L514.12 690.6 L514.29 685.9 L514.46 682.6 L514.63 687.2 L514.80 684.1 L514.97 685.7 L515.14 687.6 L515.31 688.2 L515.48 686.4 L515.65 689.9 L515.82 686.7 L515.99 683.2 L516.16 689.6 L516.33 685.7 L516.50 690.3 L516.67 684.6 L516.84 688.2 L517.01 687.4 L517.18 681.2 L517.35 682.0 L517.52 683.2 L517.69 690.8 L517.86 681.4 L518.03 689.4 L518.20 689.8 L518.37 687.9 L518.54 688.2 L518.71 684.4 L518.88 685.4 L519.05 685.8 L519.22 686.0 L519.39 686.5 L519.56 683.4 L519.73 681.7 L519.90 682.0 L520.07 684.9 L520.24 678.8 L520.41 680.2 L520.58 682.9 L520.75 682.7 L520.92 683.8 L521.09 679.6 L521.26 683.9 L521.43 684.3 L521.60 687.5 L521.77 680.0 L521.94 684.3 L522.11 686.6 L522.28 686.6 L522.45 688.7 L522.62 688.3 L522.79 682.2 L522.96 687.3 L523.13 684.7 L523.30 683.5 L523.47 690.8 L523.64 684.7 L523.81 684.3 L523.98 685.8 L524.15 684.6 L524.32 690.2 L524.49 688.3 L524.66 691.2 L524.83 688.0 L525.00 684.7 L525.17 689.4 L525.34 684.0 L525.51 684.4 L525.68 685.0 L525.85 685.5 L526.02 688.9 L526.19 683.6 L526.36 686.5 L526.53 685.5 L526.70 682.0 L526.87 682.6 L527.04 685.4 L527.21 687.3 L527.38 687.1 L527.55 687.6 L527.72 686.2 L527.89 684.7 L528.06 687.2 L528.23 682.9 L528.40 681.9 L528.57 684.8 L528.74 681.7 L528.91 684.5 L529.08 684.1 L529.25 685.0 L529.42 686.8 L529.59 684.9 L529.76 686.4 L529.93 682.9 L530.10 688.5 L530.27 685.7 L530.44 689.5 L530.61 683.2 L530.78 685.8 L530.95 688.6 L531.12 682.6 L531.29 686.3 L531.46 687.4 L531.63 687.2 L531.80 682.3 L531.97 687.2 L532.14 686.9 L532.31 683.6 L532.48 688.6 L532.65 686.3 L532.82 686.5 L532.99 685.1 L533.16 687.9 L533.33 686.4 L533.50 689.3 L533.67 687.0 L533.84 683.6 L534.01 684.4 L534.18 687.5 L534.35 683.5 L534.52 685.5 L534.69 685.8 L534.86 683.7 L535.03 679.3 L535.20 684.9 L535.37 685.3 L535.54 685.4 L535.71 683.1 L535.88 689.1 L536.05 685.4 L536.22 684.2 L536.39 684.0 L536.56 687.2 L536.73 683.0 L536.90 683.2 L537.07 691.0 L537.24 689.6 L537.41 688.8 L537.58 689.6 L537.75 687.3 L537.92 680.7 L538.09 689.1 L538.26 689.3 L538.43 687.3 L538.60 681.0 L538.77 689.7 L538.94 690.1 L539.11 684.7 L539.28 686.5 L539.45 688.2 L539.62 685.5 L539.79 688.6 L539.96 685.4 L540.13 686.9 L540.30 684.8 L540.47 680.1 L540.64 681.3 L540.81 689.1 L540.98 685.0 L541.15 688.1 L541.32 687.7 L541.49 689.6 L541.66 686.6 L541.83 683.5 L542.00 685.6 L542.17 680.8 L542.34 685.4 L542.51 688.7 L542.68 681.2 L542.85 686.7 L543.02 688.5 L543.19 690.0 L543.36 683.5 L543.53 684.4 L543.70 681.4 L543.87 683.6 L544.04 688.3 L544.21 691.9 L544.38 684.0 L544.55 691.5 L544.72 689.0 L544.89 686.6 L545.06 693.1 L545.23 683.3 L545.40 687.9 L545.57 688.6 L545.74 692.7 L545.91 692.4 L546.08 692.1 L546.25 687.3 L546.42 689.4 L546.59 690.2 L546.76 687.6 L546.93 687.0 L547.10 685.4 L547.27 684.8 L547.44 682.5 L547.61 691.0 L547.78 684.9 L547.95 681.3 L548.12 687.0 L548.29 686.2 L548.46 686.7 L548.63 691.0 L548.80 685.6 L548.97 685.0 L549.14 683.5 L549.31 685.5 L549.48 684.2 L549.65 686.0 L549.82 690.4 L549.99 686.8 L550.16 683.5 L550.33 691.0 L550.50 688.9 L550.67 689.0 L550.84 689.0 L551.01 689.4 L551.18 689.1 L551.35 691.2 L551.52 690.0 L551.69 690.9 L551.86 685.4 L552.03 686.6 L552.20 684.2 L552.37 688.7 L552.54 688.1 L552.71 684.3 L552.88 687.1 L553.05 690.2 L553.22 688.8 L553.39 682.2 L553.56 685.1 L553.73 687.2 L553.90 685.3 L554.07 686.4 L554.24 688.6 L554.41 686.0 L554.58 681.8 L554.75 686.7 L554.92 684.1 L555.09 684.5 L555.26 682.4 L555.43 679.9 L555.60 680.3 L555.77 682.8 L555.94 680.9 L556.11 679.3 L556.28 687.6 L556.45 681.5 L556.62 683.0 L556.79 686.9 L556.96 680.9" stroke="#ff0000" stroke-width="1" fill="none"/><line x1="346.2" y1="626.8" x2="346.2" y2="688" stroke="#ff0000"/><line x1="354.4" y1="645.6" x2="354.4" y2="688" stroke="#ff0000"/><line x1="181.5" y1="639.0" x2="181.5" y2="668" stroke="#ff0000"/><line x1="536.0" y1="686.0" x2="536.0" y2="665" stroke="#ff0000"/><line x1="145.0" y1="675.6" x2="145.0" y2="636" stroke="#ff0000"/><path d="M552.5 675.5 L561.5 675.5 L557 684.5 Z" stroke="#7a1a1a" fill="none" shape-rendering="auto"/></svg><div style="position:absolute;left:554px;top:664.95px;font-size:10px;line-height:11.49px;color:#8b2252;white-space:pre;">1</div><div style="position:absolute;left:196px;top:369.05px;font-size:11px;line-height:12.64px;color:#00ffff;white-space:pre;">PP9</div><div style="position:absolute;left:15px;top:34.14px;font-size:12px;line-height:13.79px;color:#000;white-space:pre;">MHz</div><div style="position:absolute;left:-74px;width:400px;top:49.14px;font-size:12px;line-height:13.79px;color:#000;white-space:pre;text-align:center;">8.9975</div><div style="position:absolute;left:10px;width:400px;top:34.14px;font-size:12px;line-height:13.79px;color:#000;white-space:pre;text-align:center;">9.0000</div><div style="position:absolute;left:95px;width:400px;top:49.14px;font-size:12px;line-height:13.79px;color:#000;white-space:pre;text-align:center;">9.0025</div><div style="position:absolute;left:181px;width:400px;top:34.14px;font-size:12px;line-height:13.79px;color:#000;white-space:pre;text-align:center;">9.0050</div><div style="position:absolute;left:265px;width:400px;top:49.14px;font-size:12px;line-height:13.79px;color:#000;white-space:pre;text-align:center;">9.0075</div><div style="position:absolute;left:-175.5px;width:400px;top:59.14px;font-size:12px;line-height:13.79px;color:#000;white-space:pre;text-align:center;">20</div><div style="position:absolute;left:370px;width:400px;top:59.14px;font-size:12px;line-height:13.79px;color:#000;white-space:pre;text-align:center;">20</div><div style="position:absolute;left:-175.5px;width:400px;top:119.14px;font-size:12px;line-height:13.79px;color:#000;white-space:pre;text-align:center;">10</div><div style="position:absolute;left:370px;width:400px;top:119.14px;font-size:12px;line-height:13.79px;color:#000;white-space:pre;text-align:center;">10</div><div style="position:absolute;left:-175.5px;width:400px;top:180.14px;font-size:12px;line-height:13.79px;color:#000;white-space:pre;text-align:center;">0</div><div style="position:absolute;left:370px;width:400px;top:180.14px;font-size:12px;line-height:13.79px;color:#000;white-space:pre;text-align:center;">0</div><div style="position:absolute;left:-177.0px;width:400px;top:240.14px;font-size:12px;line-height:13.79px;color:#000;white-space:pre;text-align:center;">-10</div><div style="position:absolute;left:368.5px;width:400px;top:240.14px;font-size:12px;line-height:13.79px;color:#000;white-space:pre;text-align:center;">-10</div><div style="position:absolute;left:-177.0px;width:400px;top:300.14px;font-size:12px;line-height:13.79px;color:#000;white-space:pre;text-align:center;">-20</div><div style="position:absolute;left:368.5px;width:400px;top:300.14px;font-size:12px;line-height:13.79px;color:#000;white-space:pre;text-align:center;">-20</div><div style="position:absolute;left:-177.0px;width:400px;top:360.14px;font-size:12px;line-height:13.79px;color:#000;white-space:pre;text-align:center;">-30</div><div style="position:absolute;left:368.5px;width:400px;top:360.14px;font-size:12px;line-height:13.79px;color:#000;white-space:pre;text-align:center;">-30</div><div style="position:absolute;left:-177.0px;width:400px;top:421.14px;font-size:12px;line-height:13.79px;color:#000;white-space:pre;text-align:center;">-40</div><div style="position:absolute;left:368.5px;width:400px;top:421.14px;font-size:12px;line-height:13.79px;color:#000;white-space:pre;text-align:center;">-40</div><div style="position:absolute;left:-177.0px;width:400px;top:481.14px;font-size:12px;line-height:13.79px;color:#000;white-space:pre;text-align:center;">-50</div><div style="position:absolute;left:368.5px;width:400px;top:481.14px;font-size:12px;line-height:13.79px;color:#000;white-space:pre;text-align:center;">-50</div><div style="position:absolute;left:-177.0px;width:400px;top:541.14px;font-size:12px;line-height:13.79px;color:#000;white-space:pre;text-align:center;">-60</div><div style="position:absolute;left:368.5px;width:400px;top:541.14px;font-size:12px;line-height:13.79px;color:#000;white-space:pre;text-align:center;">-60</div><div style="position:absolute;left:-177.0px;width:400px;top:601.14px;font-size:12px;line-height:13.79px;color:#000;white-space:pre;text-align:center;">-70</div><div style="position:absolute;left:368.5px;width:400px;top:601.14px;font-size:12px;line-height:13.79px;color:#000;white-space:pre;text-align:center;">-70</div><div style="position:absolute;left:-177.0px;width:400px;top:662.14px;font-size:12px;line-height:13.79px;color:#000;white-space:pre;text-align:center;">-80</div><div style="position:absolute;left:368.5px;width:400px;top:662.14px;font-size:12px;line-height:13.79px;color:#000;white-space:pre;text-align:center;">-80</div><div style="position:absolute;left:-177.0px;width:400px;top:722.14px;font-size:12px;line-height:13.79px;color:#000;white-space:pre;text-align:center;">-90</div><div style="position:absolute;left:368.5px;width:400px;top:722.14px;font-size:12px;line-height:13.79px;color:#000;white-space:pre;text-align:center;">-90</div><div style="position:absolute;left:14px;top:86.14px;font-size:12px;line-height:13.79px;color:#000;white-space:pre;">dB</div><div style="position:absolute;left:562px;top:86.14px;font-size:12px;line-height:13.79px;color:#000;white-space:pre;">dB</div><div style="position:absolute;left:89px;width:400px;top:739.32px;font-size:11.8px;line-height:13.56px;color:#000;white-space:pre;text-align:center;">Siatka osi-X: 2.5 kHz</div><div style="position:absolute;left:5px;top:524.14px;font-size:12px;line-height:13.79px;color:#d8f0d8;white-space:pre;">R</div><div style="position:absolute;left:591px;top:0px;width:1px;height:764px;background:#2b5a2e;"></div><div style="position:absolute;left:591px;top:757px;width:689px;height:13px;background:linear-gradient(to bottom, rgba(0,0,0,0.18), rgba(0,0,0,0.0));"></div><div style="position:absolute;left:1272px;top:0px;width:8px;height:770px;background:linear-gradient(to right, rgba(0,0,0,0.15), rgba(0,0,0,0.0));"></div><div style="position:absolute;left:592px;top:0px;width:680px;height:757px;background:#f0f0f0;border:1px solid #6aaaf0;"></div><div style="position:absolute;left:593px;top:1px;width:678px;height:30px;background:#fff;"></div><svg style="left:601px;top:7px" width="16" height="16"><rect x="0.5" y="0.5" width="15" height="15" fill="#ffff00" stroke="#a8a878"/><path d="M1 6.5 H15 M1 9.5 H15 M5.5 1 V15 M10.5 1 V15" stroke="#d8d8a0" stroke-width="0.6"/><path d="M0.5 13.2 L2 12.8 L3 14 L4.2 13 L5 13.2 L5.5 3 L6.5 2.2 L8 3.2 L9.5 2.2 L10.5 3 L11 13.5 L12.3 14.5 L13 12.5 L14.5 13.5 L15.5 12.8" stroke="#ff7010" fill="none" stroke-width="1.1"/></svg><div style="position:absolute;left:622px;top:9.60px;font-size:12.6px;line-height:14.48px;color:#000;white-space:pre;">WinNWT4 - V.4.08.02 - FW:2.110:V00 - hfm9.hfc - COM5</div><div style="position:absolute;left:1152px;top:15px;width:10px;height:1px;background:#000;"></div><div style="position:absolute;left:1197px;top:10px;width:10px;height:10px;border:1px solid #ccc;"></div><svg style="left:1243px;top:10px" width="11" height="11"><path d="M0.5 0.5 L10.5 10.5 M10.5 0.5 L0.5 10.5" stroke="#000" stroke-width="1"/></svg><div style="position:absolute;left:599px;top:33.78px;font-size:12.4px;line-height:14.25px;color:#000;white-space:pre;">Plik</div><div style="position:absolute;left:631px;top:33.78px;font-size:12.4px;line-height:14.25px;color:#000;white-space:pre;">Ustawienia</div><div style="position:absolute;left:705px;top:33.78px;font-size:12.4px;line-height:14.25px;color:#000;white-space:pre;">Wykres</div><div style="position:absolute;left:757px;top:33.78px;font-size:12.4px;line-height:14.25px;color:#000;white-space:pre;">NWT</div><div style="position:absolute;left:796px;top:33.78px;font-size:12.4px;line-height:14.25px;color:#888;white-space:pre;">Pomiary</div><div style="position:absolute;left:853px;top:33.78px;font-size:12.4px;line-height:14.25px;color:#000;white-space:pre;">Pomoc</div><div style="position:absolute;left:593px;top:50px;width:678px;height:1px;background:#a0a0a0;"></div><div style="position:absolute;left:593px;top:51px;width:678px;height:1px;background:#fff;"></div><div style="position:absolute;left:593px;top:84px;width:678px;height:1px;background:#a0a0a0;"></div><div style="position:absolute;left:593px;top:85px;width:678px;height:1px;background:#fff;"></div><div style="position:absolute;left:596px;top:55px;width:2px;height:26px;background:#fff;"></div><div style="position:absolute;left:598px;top:55px;width:1px;height:26px;background:#a0a0a0;"></div><div style="position:absolute;left:599px;top:55px;width:2px;height:26px;background:#fff;"></div><div style="position:absolute;left:601px;top:55px;width:1px;height:26px;background:#a0a0a0;"></div><div style="position:absolute;left:596px;top:80px;width:6px;height:1px;background:#a0a0a0;"></div><div style="position:absolute;left:699px;top:52px;width:1px;height:32px;background:#a0a0a0;"></div><div style="position:absolute;left:700px;top:52px;width:1px;height:32px;background:#fff;"></div><div style="position:absolute;left:703px;top:55px;width:2px;height:26px;background:#fff;"></div><div style="position:absolute;left:705px;top:55px;width:1px;height:26px;background:#a0a0a0;"></div><div style="position:absolute;left:706px;top:55px;width:2px;height:26px;background:#fff;"></div><div style="position:absolute;left:708px;top:55px;width:1px;height:26px;background:#a0a0a0;"></div><div style="position:absolute;left:703px;top:80px;width:6px;height:1px;background:#a0a0a0;"></div><div style="position:absolute;left:837px;top:52px;width:1px;height:32px;background:#a0a0a0;"></div><div style="position:absolute;left:838px;top:52px;width:1px;height:32px;background:#fff;"></div><div style="position:absolute;left:842px;top:55px;width:2px;height:26px;background:#fff;"></div><div style="position:absolute;left:844px;top:55px;width:1px;height:26px;background:#a0a0a0;"></div><div style="position:absolute;left:845px;top:55px;width:2px;height:26px;background:#fff;"></div><div style="position:absolute;left:847px;top:55px;width:1px;height:26px;background:#a0a0a0;"></div><div style="position:absolute;left:842px;top:80px;width:6px;height:1px;background:#a0a0a0;"></div><div style="position:absolute;left:913px;top:52px;width:1px;height:32px;background:#a0a0a0;"></div><div style="position:absolute;left:914px;top:52px;width:1px;height:32px;background:#fff;"></div><div style="position:absolute;left:917px;top:55px;width:2px;height:26px;background:#fff;"></div><div style="position:absolute;left:919px;top:55px;width:1px;height:26px;background:#a0a0a0;"></div><div style="position:absolute;left:920px;top:55px;width:2px;height:26px;background:#fff;"></div><div style="position:absolute;left:922px;top:55px;width:1px;height:26px;background:#a0a0a0;"></div><div style="position:absolute;left:917px;top:80px;width:6px;height:1px;background:#a0a0a0;"></div><svg style="left:609px;top:57px" width="23" height="22"><defs><linearGradient id="pw" x1="0" y1="0" x2="1" y2="1"><stop offset="0" stop-color="#c4582e"/><stop offset="0.6" stop-color="#cf7a52"/><stop offset="1" stop-color="#e6ad8a"/></linearGradient></defs><rect x="1" y="1" width="21" height="20.5" rx="4" fill="url(#pw)" stroke="#c14a26" stroke-width="1.6"/><circle cx="11.5" cy="11" r="6.6" fill="none" stroke="#fff" stroke-width="1.9"/><rect x="10.6" y="4" width="1.9" height="10.5" fill="#fff"/></svg><svg style="left:640px;top:56px" width="24" height="24"><defs><linearGradient id="pb640" x1="0" y1="0" x2="0" y2="1"><stop offset="0" stop-color="#6a6a6a"/><stop offset="0.25" stop-color="#d8d8d8"/><stop offset="0.4" stop-color="#111"/><stop offset="0.65" stop-color="#444"/><stop offset="1" stop-color="#8a8a8a"/></linearGradient></defs><rect x="4.5" y="0.5" width="14" height="8" fill="#fafafa" stroke="#d4d4d4"/><rect x="6" y="2" width="11" height="5" fill="#e4e4e4"/><rect x="0" y="7" width="23" height="12.5" rx="2" fill="url(#pb640)"/><rect x="3.5" y="16.5" width="16" height="7" fill="#fff" stroke="#cfcfcf"/><path d="M6 19.5 L17 19.5 M6 21.5 L15 21.5" stroke="#e2e2e2"/></svg><svg style="left:670px;top:56px" width="24" height="24"><defs><linearGradient id="pb670" x1="0" y1="0" x2="0" y2="1"><stop offset="0" stop-color="#6a6a6a"/><stop offset="0.25" stop-color="#d8d8d8"/><stop offset="0.4" stop-color="#111"/><stop offset="0.65" stop-color="#444"/><stop offset="1" stop-color="#8a8a8a"/></linearGradient></defs><rect x="4.5" y="0.5" width="14" height="8" fill="#fafafa" stroke="#d4d4d4"/><rect x="6" y="2" width="11" height="5" fill="#e4e4e4"/><rect x="0" y="7" width="23" height="12.5" rx="2" fill="url(#pb670)"/><rect x="3.5" y="16.5" width="16" height="7" fill="#fff" stroke="#cfcfcf"/><path d="M6 19.5 L17 19.5 M6 21.5 L15 21.5" stroke="#e2e2e2"/><text x="11.8" y="15.2" font-family="Liberation Sans" font-size="11.5" fill="#ff0000" text-anchor="middle" textLength="23" lengthAdjust="spacingAndGlyphs">PDF</text></svg><svg style="left:714px;top:56px" width="26" height="25"><defs><linearGradient id="wr" x1="0" y1="0" x2="1" y2="0"><stop offset="0" stop-color="#bdbdbd"/><stop offset="0.5" stop-color="#eeeeee"/><stop offset="1" stop-color="#b0b0b0"/></linearGradient><linearGradient id="sd" x1="0" y1="0" x2="0" y2="1"><stop offset="0" stop-color="#ffe0b0"/><stop offset="0.45" stop-color="#f59010"/><stop offset="1" stop-color="#ffc880"/></linearGradient></defs><path d="M2 4 Q2 0.6 5 0.6 L6 0.6 L6 4 Q6 5.2 7.5 5.2 Q9 5.2 9 4 L9 0.6 L10.5 0.6 Q13.6 0.6 13.6 4 L13.6 6 Q13.6 9 11.5 10.5 L11.5 20.5 Q11.5 23.5 7.5 23.5 Q4 23.5 4 20.5 L4 10.5 Q2 9 2 6 Z" fill="url(#wr)" stroke="#8c8c8c" stroke-width="1"/><circle cx="7.6" cy="20" r="1.5" fill="#f4f4f4" stroke="#888" stroke-width="0.8"/><rect x="15.3" y="0.8" width="8.4" height="12.6" rx="2.5" fill="url(#sd)" stroke="#d07030" stroke-width="1"/><path d="M18.3 13.4 L18.3 18 Q16.8 19 17 21 Q17.5 23.5 19.5 23.5 Q21.5 23.5 22 21 Q22.2 19 20.7 18 L20.7 13.4" fill="#e8e8e8" stroke="#9a9a9a" stroke-width="0.9"/></svg><svg style="left:747px;top:57px" width="22" height="22"><rect x="1" y="1" width="20" height="20" rx="1" fill="#ffe38a" stroke="#6e6e6e" stroke-width="2"/><line x1="6.5" y1="2" x2="6.5" y2="20" stroke="#22c8d8" stroke-dasharray="2 1"/><line x1="17.5" y1="2" x2="17.5" y2="20" stroke="#22c8d8" stroke-dasharray="2 1"/><path d="M2 7 Q6 6 9 7 Q12 9 15 7 Q18 6 20 7" stroke="#ff2020" fill="none" stroke-width="1.2"/></svg><svg style="left:777px;top:56px" width="25" height="25"><g fill="#f8f8f8" stroke="#a8a8a8" stroke-width="0.9"><path d="M0.8 20.5 L9.5 1.5 L12 2.5 L11 6 L3 21.5 Z"/><path d="M9 7 L21 7.5 Q23 8.5 21 10 L10 10 Z"/><path d="M13 21 L20.5 12.5 L23 13.5 L21 17 L15 22.5 Z"/><path d="M5.5 17 L8.5 17 L8.5 24 L5.5 24 Z"/><path d="M10 10 L15 22" stroke-width="0.7"/></g><path d="M3.2 6.6 Q1.2 8.6 3.2 10.6 L14.8 22.4 Q16.8 24.4 18.8 22.4 Q20.8 20.4 18.8 18.4 L7.2 6.6 Q5.2 4.6 3.2 6.6 Z" fill="#e01010" stroke="#c00000" stroke-width="0.6"/><path d="M4 8 L15 19" stroke="#ff6060" stroke-width="0.8" opacity="0.6"/></svg><svg style="left:809px;top:56px" width="24" height="25"><ellipse cx="12" cy="14" rx="7" ry="9" fill="#000"/><ellipse cx="12" cy="5" rx="4" ry="4.5" fill="#000"/><ellipse cx="13" cy="15" rx="4.5" ry="6.5" fill="#fff"/><path d="M11 6 L15 6 L13 8Z" fill="#f0b020"/><circle cx="11" cy="4" r="0.9" fill="#fff"/><circle cx="14" cy="4" r="0.9" fill="#fff"/><path d="M0 9 L6 9 L5 11Z M24 10 L18 9 L19 11Z" fill="#000"/><ellipse cx="7" cy="22" rx="3.5" ry="2" fill="#f0b020"/><ellipse cx="17" cy="22" rx="3.5" ry="2" fill="#f0b020"/></svg><svg style="left:852px;top:57px" width="25" height="23"><defs><linearGradient id="kf852" x1="0" y1="1" x2="1" y2="0"><stop offset="0" stop-color="#8cc0dc"/><stop offset="1" stop-color="#c8ecfa"/></linearGradient></defs><rect x="1" y="0" width="1.6" height="23" fill="#000"/><rect x="1" y="1" width="4" height="1" fill="#000"/><rect x="1" y="21.5" width="18" height="1.5" fill="#000"/><path d="M19 1 L25 1 L25 22 L18 22 L18 20 L21 20 L21 12 L19 12 Z" fill="#000"/><path d="M3 8 L14 2.5 L19 2 L22 4 L21 12 L8 20 L3 21 Z" fill="#f6f6f6" stroke="#000" stroke-width="1"/><path d="M3 21.5 L4 10 L23 5 L22 8 L9 21.5 Z" fill="url(#kf852)" stroke="#8cc0dc" stroke-width="0.6"/><text x="3" y="15.5" font-family="Liberation Sans" font-size="12.5" font-weight="bold" fill="#a80000" textLength="13.5" lengthAdjust="spacingAndGlyphs">K1</text></svg><svg style="left:883px;top:57px" width="25" height="23"><defs><linearGradient id="kf883" x1="0" y1="1" x2="1" y2="0"><stop offset="0" stop-color="#a0a0a0"/><stop offset="1" stop-color="#d0d0d0"/></linearGradient></defs><rect x="1" y="0" width="1.6" height="23" fill="#505050"/><rect x="1" y="1" width="4" height="1" fill="#505050"/><rect x="1" y="21.5" width="18" height="1.5" fill="#505050"/><path d="M19 1 L25 1 L25 22 L18 22 L18 20 L21 20 L21 12 L19 12 Z" fill="#505050"/><path d="M3 8 L14 2.5 L19 2 L22 4 L21 12 L8 20 L3 21 Z" fill="#f6f6f6" stroke="#505050" stroke-width="1"/><path d="M3 21.5 L4 10 L23 5 L22 8 L9 21.5 Z" fill="url(#kf883)" stroke="#a0a0a0" stroke-width="0.6"/><text x="3" y="15.5" font-family="Liberation Sans" font-size="12.5" font-weight="bold" fill="#8a8a8a" textLength="13.5" lengthAdjust="spacingAndGlyphs">K2</text></svg><svg style="left:929px;top:56px" width="25" height="25"><defs><linearGradient id="of" x1="0" y1="1" x2="1" y2="0"><stop offset="0" stop-color="#8ec0dc"/><stop offset="1" stop-color="#cfeefc"/></linearGradient></defs><path d="M2 23 L2 10 Q2 8 4 7.5 L8 6.5 L18 1.5 L21 2 L21 3 L22 9 L10 20 Z" fill="#b4d8ec" stroke="#505860" stroke-width="0.9"/><path d="M5 19 L6 14 L22 5 L22 10 Z" fill="#f4f4f4" stroke="#666" stroke-width="0.6"/><path d="M2 23.5 L9 15 L23 7 Q24.5 7 24 8.5 L21 14 Q19 17 12 20.5 L5 23.5 Q3 24 2 23.5 Z" fill="url(#of)" stroke="#505860" stroke-width="0.9"/></svg><svg style="left:961px;top:57px" width="22" height="22"><rect x="1" y="1" width="20" height="20" rx="2" fill="#8bb4e0" stroke="#6080a8"/><rect x="4" y="2" width="14" height="9" fill="#e8f0f4"/><line x1="4" y1="2.5" x2="18" y2="2.5" stroke="#4040c0"/><rect x="5" y="13" width="12" height="8" fill="#d8d8d8"/><rect x="7" y="15" width="3" height="5" fill="#555"/></svg><svg style="left:991px;top:56px" width="24" height="24"><rect x="0" y="0" width="24" height="24" fill="#a0a0a0"/><path d="M1 5 L23 5 M5 1 L1 5 L5 9 M19 1 L23 5 L19 9 M1 11 L5 15 L1 19 M23 11 L19 15 L23 19 M5 15 L19 15" stroke="#ff1a1a" stroke-width="1.2" fill="none"/></svg><div style="position:absolute;left:593px;top:86px;width:77px;height:1px;background:#fff;"></div><div style="position:absolute;left:669px;top:86px;width:1px;height:21px;background:#696969;"></div><div style="position:absolute;left:670px;top:86px;width:1px;height:21px;background:#a0a0a0;"></div><div style="position:absolute;left:671px;top:87px;width:600px;height:1px;background:#fff;"></div><div style="position:absolute;left:671px;top:106px;width:600px;height:1px;background:#fff;"></div><div style="position:absolute;left:805px;top:88px;width:1px;height:19px;background:#696969;"></div><div style="position:absolute;left:806px;top:88px;width:1px;height:19px;background:#a0a0a0;"></div><div style="position:absolute;left:852px;top:88px;width:1px;height:19px;background:#696969;"></div><div style="position:absolute;left:853px;top:88px;width:1px;height:19px;background:#a0a0a0;"></div><div style="position:absolute;left:946px;top:88px;width:1px;height:19px;background:#696969;"></div><div style="position:absolute;left:947px;top:88px;width:1px;height:19px;background:#a0a0a0;"></div><div style="position:absolute;left:1023px;top:88px;width:1px;height:19px;background:#696969;"></div><div style="position:absolute;left:1024px;top:88px;width:1px;height:19px;background:#a0a0a0;"></div><div style="position:absolute;left:605px;top:91.14px;font-size:12px;line-height:13.79px;color:#000;white-space:pre;">Tryb-NWT</div><div style="position:absolute;left:683px;top:91.14px;font-size:12px;line-height:13.79px;color:#000;white-space:pre;">Manadżer-wykresów</div><div style="position:absolute;left:818px;top:91.14px;font-size:12px;line-height:13.79px;color:#000;white-space:pre;">VFO</div><div style="position:absolute;left:865px;top:91.14px;font-size:12px;line-height:13.79px;color:#000;white-space:pre;">MiermikMocy</div><div style="position:absolute;left:959px;top:91.14px;font-size:12px;line-height:13.79px;color:#000;white-space:pre;">Kalkulator</div><div style="position:absolute;left:1269px;top:107px;width:1px;height:628px;background:#a0a0a0;"></div><div style="position:absolute;left:1270px;top:107px;width:1px;height:629px;background:#696969;"></div><div style="position:absolute;left:593px;top:734px;width:677px;height:1px;background:#a0a0a0;"></div><div style="position:absolute;left:593px;top:735px;width:678px;height:1px;background:#696969;"></div><svg style="left:1253px;top:738px" width="18" height="18"><path d="M17 1 L1 17 M17 5 L5 17 M17 9 L9 17 M17 13 L13 17" stroke="#999" stroke-width="1.2"/></svg><div style="position:absolute;left:615px;top:125px;width:219px;height:177px;border:1px solid #a0a0a0;box-shadow:inset 1px 1px 0 #fff, 1px 1px 0 #fff;box-sizing:border-box;"></div><div style="position:absolute;left:622px;top:120.94px;font-size:12px;line-height:13.79px;background:#f0f0f0;padding:0 3px;white-space:pre">Ustawienia NWT</div><div style="position:absolute;right:571px;top:137.94px;font-size:12px;line-height:13.79px;color:#000;white-space:pre;text-align:right;">Start Częst.(Hz)</div><div style="position:absolute;left:715px;top:133px;width:100px;height:20px;background:#fff;border-top:1px solid #a0a0a0;border-left:1px solid #a0a0a0;border-right:1px solid #fff;border-bottom:1px solid #fff;box-sizing:border-box;"></div><div style="position:absolute;left:716px;top:134px;width:98px;height:18px;border-top:1px solid #696969;border-left:1px solid #696969;border-right:1px solid #e3e3e3;border-bottom:1px solid #e3e3e3;box-sizing:border-box;"></div><div style="position:absolute;left:719px;top:137.94px;font-size:12px;line-height:13.79px;color:#000;white-space:pre;">8995000</div><div style="position:absolute;right:571px;top:157.94px;font-size:12px;line-height:13.79px;color:#000;white-space:pre;text-align:right;">Stop Częst. (Hz)</div><div style="position:absolute;left:715px;top:154px;width:100px;height:20px;background:#fff;border-top:1px solid #a0a0a0;border-left:1px solid #a0a0a0;border-right:1px solid #fff;border-bottom:1px solid #fff;box-sizing:border-box;"></div><div style="position:absolute;left:716px;top:155px;width:98px;height:18px;border-top:1px solid #696969;border-left:1px solid #696969;border-right:1px solid #e3e3e3;border-bottom:1px solid #e3e3e3;box-sizing:border-box;"></div><div style="position:absolute;left:719px;top:158.94px;font-size:12px;line-height:13.79px;color:#000;white-space:pre;">9010000</div><div style="position:absolute;right:551px;top:178.94px;font-size:12px;line-height:13.79px;color:#000;white-space:pre;text-align:right;">Krok (Hz)</div><div style="position:absolute;left:735px;top:175px;width:80px;height:20px;background:#f0f0f0;border-top:1px solid #a0a0a0;border-left:1px solid #a0a0a0;border-right:1px solid #fff;border-bottom:1px solid #fff;box-sizing:border-box;"></div><div style="position:absolute;left:736px;top:176px;width:78px;height:18px;border-top:1px solid #000;border-left:1px solid #000;border-right:1px solid #e3e3e3;border-bottom:1px solid #e3e3e3;box-sizing:border-box;"></div><div style="position:absolute;left:739px;top:179.94px;font-size:12px;line-height:13.79px;color:#808080;white-space:pre;">5</div><div style="position:absolute;right:551px;top:199.94px;font-size:12px;line-height:13.79px;color:#000;white-space:pre;text-align:right;">Próbki</div><div style="position:absolute;left:735px;top:196px;width:80px;height:20px;background:#fff;border-top:1px solid #a0a0a0;border-left:1px solid #a0a0a0;border-right:1px solid #fff;border-bottom:1px solid #fff;box-sizing:border-box;"></div><div style="position:absolute;left:736px;top:197px;width:78px;height:18px;border-top:1px solid #696969;border-left:1px solid #696969;border-right:1px solid #e3e3e3;border-bottom:1px solid #e3e3e3;box-sizing:border-box;"></div><div style="position:absolute;left:739px;top:200.94px;font-size:12px;line-height:13.79px;color:#000;white-space:pre;">3000</div><div style="position:absolute;right:551px;top:220.94px;font-size:12px;line-height:13.79px;color:#8a8a8a;white-space:pre;text-align:right;">Przerwy (uS)</div><div style="position:absolute;left:735px;top:217px;width:80px;height:20px;background:#f0f0f0;border-top:1px solid #a0a0a0;border-left:1px solid #a0a0a0;border-right:1px solid #fff;border-bottom:1px solid #fff;box-sizing:border-box;"></div><div style="position:absolute;left:736px;top:218px;width:78px;height:18px;border-top:1px solid #000;border-left:1px solid #000;border-right:1px solid #e3e3e3;border-bottom:1px solid #e3e3e3;box-sizing:border-box;"></div><div style="position:absolute;left:796px;top:219px;width:17px;height:16px;background:#f0f0f0;border-top:1px solid #fff;border-left:1px solid #fff;border-right:1px solid #000;border-bottom:1px solid #000;box-sizing:border-box;"></div><div style="position:absolute;left:797px;top:220px;width:15px;height:14px;border-top:1px solid #e3e3e3;border-left:1px solid #e3e3e3;border-right:1px solid #a0a0a0;border-bottom:1px solid #a0a0a0;box-sizing:border-box;"></div><svg style="position:absolute;left:796px;top:219px" width="17" height="16"><path d="M5.0 6.0 L12.0 6.0 L8.5 10.0Z" fill="#a0a0a0"/></svg><div style="position:absolute;left:739px;top:221.94px;font-size:12px;line-height:13.79px;color:#808080;white-space:pre;">0</div><div style="position:absolute;right:551px;top:241.94px;font-size:12px;line-height:13.79px;color:#000;white-space:pre;text-align:right;">LCD - przesuń</div><div style="position:absolute;left:735px;top:238px;width:80px;height:20px;background:#fff;border-top:1px solid #a0a0a0;border-left:1px solid #a0a0a0;border-right:1px solid #fff;border-bottom:1px solid #fff;box-sizing:border-box;"></div><div style="position:absolute;left:736px;top:239px;width:78px;height:18px;border-top:1px solid #696969;border-left:1px solid #696969;border-right:1px solid #e3e3e3;border-bottom:1px solid #e3e3e3;box-sizing:border-box;"></div><div style="position:absolute;left:739px;top:242.94px;font-size:12px;line-height:13.79px;color:#000;white-space:pre;">0</div><div style="position:absolute;left:632px;top:262.94px;font-size:12px;line-height:13.79px;color:#000;white-space:pre;">Profil</div><div style="position:absolute;left:665px;top:259px;width:150px;height:20px;background:#fff;border-top:1px solid #a0a0a0;border-left:1px solid #a0a0a0;border-right:1px solid #fff;border-bottom:1px solid #fff;box-sizing:border-box;"></div><div style="position:absolute;left:666px;top:260px;width:148px;height:18px;border-top:1px solid #696969;border-left:1px solid #696969;border-right:1px solid #e3e3e3;border-bottom:1px solid #e3e3e3;box-sizing:border-box;"></div><div style="position:absolute;left:796px;top:261px;width:17px;height:16px;background:#f0f0f0;border-top:1px solid #fff;border-left:1px solid #fff;border-right:1px solid #696969;border-bottom:1px solid #696969;box-sizing:border-box;"></div><div style="position:absolute;left:797px;top:262px;width:15px;height:14px;border-top:1px solid #e3e3e3;border-left:1px solid #e3e3e3;border-right:1px solid #a0a0a0;border-bottom:1px solid #a0a0a0;box-sizing:border-box;"></div><svg style="position:absolute;left:796px;top:261px" width="17" height="16"><path d="M5.0 6.0 L12.0 6.0 L8.5 10.0Z" fill="#000"/></svg><div style="position:absolute;left:669px;top:263.94px;font-size:12px;line-height:13.79px;color:#000;white-space:pre;">default</div><div style="position:absolute;left:615px;top:315px;width:219px;height:32px;border:1px solid #a0a0a0;box-shadow:inset 1px 1px 0 #fff, 1px 1px 0 #fff;box-sizing:border-box;"></div><div style="position:absolute;left:622px;top:310.94px;font-size:12px;line-height:13.79px;background:#f0f0f0;padding:0 3px;white-space:pre">Tłumienie</div><div style="position:absolute;left:667px;top:326.94px;font-size:12px;line-height:13.79px;color:#000;white-space:pre;">0dB/50dB</div><div style="position:absolute;left:735px;top:323px;width:80px;height:19px;background:#fff;border-top:1px solid #a0a0a0;border-left:1px solid #a0a0a0;border-right:1px solid #fff;border-bottom:1px solid #fff;box-sizing:border-box;"></div><div style="position:absolute;left:736px;top:324px;width:78px;height:17px;border-top:1px solid #696969;border-left:1px solid #696969;border-right:1px solid #e3e3e3;border-bottom:1px solid #e3e3e3;box-sizing:border-box;"></div><div style="position:absolute;left:796px;top:325px;width:17px;height:15px;background:#f0f0f0;border-top:1px solid #fff;border-left:1px solid #fff;border-right:1px solid #696969;border-bottom:1px solid #696969;box-sizing:border-box;"></div><div style="position:absolute;left:797px;top:326px;width:15px;height:13px;border-top:1px solid #e3e3e3;border-left:1px solid #e3e3e3;border-right:1px solid #a0a0a0;border-bottom:1px solid #a0a0a0;box-sizing:border-box;"></div><svg style="position:absolute;left:796px;top:325px" width="17" height="15"><path d="M5.0 5.5 L12.0 5.5 L8.5 9.5Z" fill="#000"/></svg><div style="position:absolute;left:739px;top:326.94px;font-size:12px;line-height:13.79px;color:#000;white-space:pre;">0dB</div><div style="position:absolute;left:615px;top:360px;width:219px;height:97px;border:1px solid #a0a0a0;box-shadow:inset 1px 1px 0 #fff, 1px 1px 0 #fff;box-sizing:border-box;"></div><div style="position:absolute;left:622px;top:355.94px;font-size:12px;line-height:13.79px;background:#f0f0f0;padding:0 3px;white-space:pre">Tryb</div><div style="position:absolute;left:695px;top:368px;width:130px;height:19px;background:#fff;border-top:1px solid #a0a0a0;border-left:1px solid #a0a0a0;border-right:1px solid #fff;border-bottom:1px solid #fff;box-sizing:border-box;"></div><div style="position:absolute;left:696px;top:369px;width:128px;height:17px;border-top:1px solid #696969;border-left:1px solid #696969;border-right:1px solid #e3e3e3;border-bottom:1px solid #e3e3e3;box-sizing:border-box;"></div><div style="position:absolute;left:806px;top:370px;width:17px;height:15px;background:#f0f0f0;border-top:1px solid #fff;border-left:1px solid #fff;border-right:1px solid #696969;border-bottom:1px solid #696969;box-sizing:border-box;"></div><div style="position:absolute;left:807px;top:371px;width:15px;height:13px;border-top:1px solid #e3e3e3;border-left:1px solid #e3e3e3;border-right:1px solid #a0a0a0;border-bottom:1px solid #a0a0a0;box-sizing:border-box;"></div><svg style="position:absolute;left:806px;top:370px" width="17" height="15"><path d="M5.0 5.5 L12.0 5.5 L8.5 9.5Z" fill="#000"/></svg><div style="position:absolute;left:699px;top:371.94px;font-size:12px;line-height:13.79px;color:#000;white-space:pre;">PełnyTryb</div><div style="position:absolute;right:479px;top:395.94px;font-size:12px;line-height:13.79px;color:#000;white-space:pre;text-align:right;">Mat. korekcja Kan.1</div><div style="position:absolute;left:807px;top:395px;width:13px;height:13px;background:#fff;border-top:1px solid #a0a0a0;border-left:1px solid #a0a0a0;border-right:1px solid #fff;border-bottom:1px solid #fff;box-sizing:border-box;"></div><div style="position:absolute;left:808px;top:396px;width:11px;height:11px;border-top:1px solid #696969;border-left:1px solid #696969;border-right:1px solid #e3e3e3;border-bottom:1px solid #e3e3e3;box-sizing:border-box;"></div><div style="position:absolute;right:479px;top:416.94px;font-size:12px;line-height:13.79px;color:#000;white-space:pre;text-align:right;">Mat. korekcja Kan.2</div><div style="position:absolute;left:807px;top:416px;width:13px;height:13px;background:#fff;border-top:1px solid #a0a0a0;border-left:1px solid #a0a0a0;border-right:1px solid #fff;border-bottom:1px solid #fff;box-sizing:border-box;"></div><div style="position:absolute;left:808px;top:417px;width:11px;height:11px;border-top:1px solid #696969;border-left:1px solid #696969;border-right:1px solid #e3e3e3;border-bottom:1px solid #e3e3e3;box-sizing:border-box;"></div><div style="position:absolute;left:860px;top:125px;width:139px;height:92px;border:1px solid #a0a0a0;box-shadow:inset 1px 1px 0 #fff, 1px 1px 0 #fff;box-sizing:border-box;"></div><div style="position:absolute;left:867px;top:120.94px;font-size:12px;line-height:13.79px;background:#f0f0f0;padding:0 3px;white-space:pre">Obliczanie Pasma</div><div style="position:absolute;right:304px;top:136.94px;font-size:12px;line-height:13.79px;color:#000;white-space:pre;text-align:right;">3dB/Q</div><div style="position:absolute;left:982px;top:136px;width:13px;height:13px;background:#fff;border-top:1px solid #a0a0a0;border-left:1px solid #a0a0a0;border-right:1px solid #fff;border-bottom:1px solid #fff;box-sizing:border-box;"></div><div style="position:absolute;left:983px;top:137px;width:11px;height:11px;border-top:1px solid #696969;border-left:1px solid #696969;border-right:1px solid #e3e3e3;border-bottom:1px solid #e3e3e3;box-sizing:border-box;"></div><svg style="left:982px;top:136px" width="13" height="13" fill="#000" shape-rendering="crispEdges"><rect x="9" y="3" width="1" height="1"/><rect x="8" y="4" width="1" height="1"/><rect x="9" y="4" width="1" height="1"/><rect x="3" y="5" width="1" height="1"/><rect x="7" y="5" width="1" height="1"/><rect x="8" y="5" width="1" height="1"/><rect x="9" y="5" width="1" height="1"/><rect x="3" y="6" width="1" height="1"/><rect x="4" y="6" width="1" height="1"/><rect x="6" y="6" width="1" height="1"/><rect x="7" y="6" width="1" height="1"/><rect x="8" y="6" width="1" height="1"/><rect x="3" y="7" width="1" height="1"/><rect x="4" y="7" width="1" height="1"/><rect x="5" y="7" width="1" height="1"/><rect x="6" y="7" width="1" height="1"/><rect x="7" y="7" width="1" height="1"/><rect x="4" y="8" width="1" height="1"/><rect x="5" y="8" width="1" height="1"/><rect x="6" y="8" width="1" height="1"/><rect x="5" y="9" width="1" height="1"/></svg><div style="position:absolute;right:304px;top:156.94px;font-size:12px;line-height:13.79px;color:#000;white-space:pre;text-align:right;">6dB/60dB/Shape</div><div style="position:absolute;left:982px;top:156px;width:13px;height:13px;background:#fff;border-top:1px solid #a0a0a0;border-left:1px solid #a0a0a0;border-right:1px solid #fff;border-bottom:1px solid #fff;box-sizing:border-box;"></div><div style="position:absolute;left:983px;top:157px;width:11px;height:11px;border-top:1px solid #696969;border-left:1px solid #696969;border-right:1px solid #e3e3e3;border-bottom:1px solid #e3e3e3;box-sizing:border-box;"></div><div style="position:absolute;right:304px;top:176.94px;font-size:12px;line-height:13.79px;color:#000;white-space:pre;text-align:right;">Linia marker</div><div style="position:absolute;left:982px;top:176px;width:13px;height:13px;background:#fff;border-top:1px solid #a0a0a0;border-left:1px solid #a0a0a0;border-right:1px solid #fff;border-bottom:1px solid #fff;box-sizing:border-box;"></div><div style="position:absolute;left:983px;top:177px;width:11px;height:11px;border-top:1px solid #696969;border-left:1px solid #696969;border-right:1px solid #e3e3e3;border-bottom:1px solid #e3e3e3;box-sizing:border-box;"></div><svg style="left:982px;top:176px" width="13" height="13" fill="#000" shape-rendering="crispEdges"><rect x="9" y="3" width="1" height="1"/><rect x="8" y="4" width="1" height="1"/><rect x="9" y="4" width="1" height="1"/><rect x="3" y="5" width="1" height="1"/><rect x="7" y="5" width="1" height="1"/><rect x="8" y="5" width="1" height="1"/><rect x="9" y="5" width="1" height="1"/><rect x="3" y="6" width="1" height="1"/><rect x="4" y="6" width="1" height="1"/><rect x="6" y="6" width="1" height="1"/><rect x="7" y="6" width="1" height="1"/><rect x="8" y="6" width="1" height="1"/><rect x="3" y="7" width="1" height="1"/><rect x="4" y="7" width="1" height="1"/><rect x="5" y="7" width="1" height="1"/><rect x="6" y="7" width="1" height="1"/><rect x="7" y="7" width="1" height="1"/><rect x="4" y="8" width="1" height="1"/><rect x="5" y="8" width="1" height="1"/><rect x="6" y="8" width="1" height="1"/><rect x="5" y="9" width="1" height="1"/></svg><div style="position:absolute;right:304px;top:196.94px;font-size:12px;line-height:13.79px;color:#000;white-space:pre;text-align:right;">Odwrotnie</div><div style="position:absolute;left:982px;top:196px;width:13px;height:13px;background:#fff;border-top:1px solid #a0a0a0;border-left:1px solid #a0a0a0;border-right:1px solid #fff;border-bottom:1px solid #fff;box-sizing:border-box;"></div><div style="position:absolute;left:983px;top:197px;width:11px;height:11px;border-top:1px solid #696969;border-left:1px solid #696969;border-right:1px solid #e3e3e3;border-bottom:1px solid #e3e3e3;box-sizing:border-box;"></div><div style="position:absolute;left:1010px;top:118px;width:70px;height:30px;background:#f0f0f0;border-top:1px solid #fff;border-left:1px solid #fff;border-right:1px solid #696969;border-bottom:1px solid #696969;box-sizing:border-box;"></div><div style="position:absolute;left:1011px;top:119px;width:68px;height:28px;border-top:1px solid #e3e3e3;border-left:1px solid #e3e3e3;border-right:1px solid #a0a0a0;border-bottom:1px solid #a0a0a0;box-sizing:border-box;"></div><div style="position:absolute;left:845px;width:400px;top:126.94px;font-size:12px;line-height:13.79px;color:#000;white-space:pre;text-align:center;">Ciągły</div><div style="position:absolute;left:1010px;top:153px;width:70px;height:30px;background:#f0f0f0;border-top:1px solid #fff;border-left:1px solid #fff;border-right:1px solid #696969;border-bottom:1px solid #696969;box-sizing:border-box;"></div><div style="position:absolute;left:1011px;top:154px;width:68px;height:28px;border-top:1px solid #e3e3e3;border-left:1px solid #e3e3e3;border-right:1px solid #a0a0a0;border-bottom:1px solid #a0a0a0;box-sizing:border-box;"></div><div style="position:absolute;left:845px;width:400px;top:161.94px;font-size:12px;line-height:13.79px;color:#000;white-space:pre;text-align:center;">Pojedynczy</div><div style="position:absolute;left:1010px;top:188px;width:70px;height:30px;background:#f0f0f0;border-top:1px solid #fff;border-left:1px solid #fff;border-right:1px solid #000;border-bottom:1px solid #000;box-sizing:border-box;"></div><div style="position:absolute;left:1011px;top:189px;width:68px;height:28px;border-top:1px solid #e3e3e3;border-left:1px solid #e3e3e3;border-right:1px solid #a0a0a0;border-bottom:1px solid #a0a0a0;box-sizing:border-box;"></div><div style="position:absolute;left:845px;width:400px;top:196.94px;font-size:12px;line-height:13.79px;color:#8a8a8a;white-space:pre;text-align:center;">Stop</div><div style="position:absolute;left:860px;top:227px;width:219px;height:39px;border:1px solid #a0a0a0;box-shadow:inset 1px 1px 0 #fff, 1px 1px 0 #fff;box-sizing:border-box;"></div><div style="position:absolute;left:867px;top:222.94px;font-size:12px;line-height:13.79px;background:#f0f0f0;padding:0 3px;white-space:pre">Częstotliwość - zakres</div><div style="position:absolute;left:885px;top:244.94px;font-size:12px;line-height:13.79px;color:#000;white-space:pre;">2x krotnie + / -</div><div style="position:absolute;left:970px;top:234px;width:30px;height:30px;background:#f0f0f0;border-top:1px solid #fff;border-left:1px solid #fff;border-right:1px solid #696969;border-bottom:1px solid #696969;box-sizing:border-box;"></div><div style="position:absolute;left:971px;top:235px;width:28px;height:28px;border-top:1px solid #e3e3e3;border-left:1px solid #e3e3e3;border-right:1px solid #a0a0a0;border-bottom:1px solid #a0a0a0;box-sizing:border-box;"></div><div style="position:absolute;left:785px;width:400px;top:242.94px;font-size:12px;line-height:13.79px;color:#000;white-space:pre;text-align:center;">+</div><div style="position:absolute;left:1000px;top:234px;width:30px;height:30px;background:#f0f0f0;border-top:1px solid #fff;border-left:1px solid #fff;border-right:1px solid #696969;border-bottom:1px solid #696969;box-sizing:border-box;"></div><div style="position:absolute;left:1001px;top:235px;width:28px;height:28px;border-top:1px solid #e3e3e3;border-left:1px solid #e3e3e3;border-right:1px solid #a0a0a0;border-bottom:1px solid #a0a0a0;box-sizing:border-box;"></div><div style="position:absolute;left:815px;width:400px;top:242.94px;font-size:12px;line-height:13.79px;color:#000;white-space:pre;text-align:center;">-</div><div style="position:absolute;left:1030px;top:234px;width:30px;height:30px;background:#f0f0f0;border-top:1px solid #fff;border-left:1px solid #fff;border-right:1px solid #696969;border-bottom:1px solid #696969;box-sizing:border-box;"></div><div style="position:absolute;left:1031px;top:235px;width:28px;height:28px;border-top:1px solid #e3e3e3;border-left:1px solid #e3e3e3;border-right:1px solid #a0a0a0;border-bottom:1px solid #a0a0a0;box-sizing:border-box;"></div><div style="position:absolute;left:845px;width:400px;top:242.94px;font-size:12px;line-height:13.79px;color:#000;white-space:pre;text-align:center;">^</div><div style="position:absolute;left:860px;top:276px;width:219px;height:48px;border:1px solid #a0a0a0;box-shadow:inset 1px 1px 0 #fff, 1px 1px 0 #fff;box-sizing:border-box;"></div><div style="position:absolute;left:867px;top:271.94px;font-size:12px;line-height:13.79px;background:#f0f0f0;padding:0 3px;white-space:pre">Kanał</div><div style="position:absolute;right:233px;top:286.94px;font-size:12px;line-height:13.79px;color:#000;white-space:pre;text-align:right;">AD8307intern</div><div style="position:absolute;left:1052px;top:286px;width:13px;height:13px;background:#fff;border-top:1px solid #a0a0a0;border-left:1px solid #a0a0a0;border-right:1px solid #fff;border-bottom:1px solid #fff;box-sizing:border-box;"></div><div style="position:absolute;left:1053px;top:287px;width:11px;height:11px;border-top:1px solid #696969;border-left:1px solid #696969;border-right:1px solid #e3e3e3;border-bottom:1px solid #e3e3e3;box-sizing:border-box;"></div><svg style="left:1052px;top:286px" width="13" height="13" fill="#000" shape-rendering="crispEdges"><rect x="9" y="3" width="1" height="1"/><rect x="8" y="4" width="1" height="1"/><rect x="9" y="4" width="1" height="1"/><rect x="3" y="5" width="1" height="1"/><rect x="7" y="5" width="1" height="1"/><rect x="8" y="5" width="1" height="1"/><rect x="9" y="5" width="1" height="1"/><rect x="3" y="6" width="1" height="1"/><rect x="4" y="6" width="1" height="1"/><rect x="6" y="6" width="1" height="1"/><rect x="7" y="6" width="1" height="1"/><rect x="8" y="6" width="1" height="1"/><rect x="3" y="7" width="1" height="1"/><rect x="4" y="7" width="1" height="1"/><rect x="5" y="7" width="1" height="1"/><rect x="6" y="7" width="1" height="1"/><rect x="7" y="7" width="1" height="1"/><rect x="4" y="8" width="1" height="1"/><rect x="5" y="8" width="1" height="1"/><rect x="6" y="8" width="1" height="1"/><rect x="5" y="9" width="1" height="1"/></svg><div style="position:absolute;right:233px;top:307.94px;font-size:12px;line-height:13.79px;color:#000;white-space:pre;text-align:right;">AD8307externK2</div><div style="position:absolute;left:1052px;top:306px;width:13px;height:13px;background:#f0f0f0;border-top:1px solid #a0a0a0;border-left:1px solid #a0a0a0;border-right:1px solid #fff;border-bottom:1px solid #fff;box-sizing:border-box;"></div><div style="position:absolute;left:1053px;top:307px;width:11px;height:11px;border-top:1px solid #000;border-left:1px solid #000;border-right:1px solid #e3e3e3;border-bottom:1px solid #e3e3e3;box-sizing:border-box;"></div><div style="position:absolute;left:860px;top:334px;width:219px;height:123px;border:1px solid #a0a0a0;box-shadow:inset 1px 1px 0 #fff, 1px 1px 0 #fff;box-sizing:border-box;"></div><div style="position:absolute;left:868px;top:329.94px;font-size:12px;line-height:13.79px;background:#f0f0f0;padding:0 3px;white-space:pre">Skalowanie i przesunięcie w osi-Y</div><div style="position:absolute;left:865px;top:358.94px;font-size:12px;line-height:13.79px;color:#000;white-space:pre;">Ymax(dB</div><div style="position:absolute;left:925px;top:356px;width:54px;height:20px;background:#fff;border-top:1px solid #a0a0a0;border-left:1px solid #a0a0a0;border-right:1px solid #fff;border-bottom:1px solid #fff;box-sizing:border-box;"></div><div style="position:absolute;left:926px;top:357px;width:52px;height:18px;border-top:1px solid #696969;border-left:1px solid #696969;border-right:1px solid #e3e3e3;border-bottom:1px solid #e3e3e3;box-sizing:border-box;"></div><div style="position:absolute;left:960px;top:358px;width:17px;height:16px;background:#f0f0f0;border-top:1px solid #fff;border-left:1px solid #fff;border-right:1px solid #696969;border-bottom:1px solid #696969;box-sizing:border-box;"></div><div style="position:absolute;left:961px;top:359px;width:15px;height:14px;border-top:1px solid #e3e3e3;border-left:1px solid #e3e3e3;border-right:1px solid #a0a0a0;border-bottom:1px solid #a0a0a0;box-sizing:border-box;"></div><svg style="position:absolute;left:960px;top:358px" width="17" height="16"><path d="M5.0 6.0 L12.0 6.0 L8.5 10.0Z" fill="#000"/></svg><div style="position:absolute;left:929px;top:360.94px;font-size:12px;line-height:13.79px;color:#000;white-space:pre;">20</div><div style="position:absolute;left:865px;top:383.94px;font-size:12px;line-height:13.79px;color:#000;white-space:pre;">Ymin(dB)</div><div style="position:absolute;left:925px;top:381px;width:54px;height:20px;background:#fff;border-top:1px solid #a0a0a0;border-left:1px solid #a0a0a0;border-right:1px solid #fff;border-bottom:1px solid #fff;box-sizing:border-box;"></div><div style="position:absolute;left:926px;top:382px;width:52px;height:18px;border-top:1px solid #696969;border-left:1px solid #696969;border-right:1px solid #e3e3e3;border-bottom:1px solid #e3e3e3;box-sizing:border-box;"></div><div style="position:absolute;left:960px;top:383px;width:17px;height:16px;background:#f0f0f0;border-top:1px solid #fff;border-left:1px solid #fff;border-right:1px solid #696969;border-bottom:1px solid #696969;box-sizing:border-box;"></div><div style="position:absolute;left:961px;top:384px;width:15px;height:14px;border-top:1px solid #e3e3e3;border-left:1px solid #e3e3e3;border-right:1px solid #a0a0a0;border-bottom:1px solid #a0a0a0;box-sizing:border-box;"></div><svg style="position:absolute;left:960px;top:383px" width="17" height="16"><path d="M5.0 6.0 L12.0 6.0 L8.5 10.0Z" fill="#000"/></svg><div style="position:absolute;left:929px;top:385.94px;font-size:12px;line-height:13.79px;color:#000;white-space:pre;">-90</div><div style="position:absolute;left:993px;top:358.94px;font-size:12px;line-height:13.79px;color:#000;white-space:pre;">K1-dB</div><div style="position:absolute;left:1030px;top:356px;width:44px;height:20px;background:#fff;border-top:1px solid #a0a0a0;border-left:1px solid #a0a0a0;border-right:1px solid #fff;border-bottom:1px solid #fff;box-sizing:border-box;"></div><div style="position:absolute;left:1031px;top:357px;width:42px;height:18px;border-top:1px solid #696969;border-left:1px solid #696969;border-right:1px solid #e3e3e3;border-bottom:1px solid #e3e3e3;box-sizing:border-box;"></div><div style="position:absolute;left:1055px;top:358px;width:17px;height:16px;background:#f0f0f0;border-top:1px solid #fff;border-left:1px solid #fff;border-right:1px solid #696969;border-bottom:1px solid #696969;box-sizing:border-box;"></div><div style="position:absolute;left:1056px;top:359px;width:15px;height:14px;border-top:1px solid #e3e3e3;border-left:1px solid #e3e3e3;border-right:1px solid #a0a0a0;border-bottom:1px solid #a0a0a0;box-sizing:border-box;"></div><svg style="position:absolute;left:1055px;top:358px" width="17" height="16"><path d="M5.0 6.0 L12.0 6.0 L8.5 10.0Z" fill="#000"/></svg><div style="position:absolute;left:1034px;top:360.94px;font-size:12px;line-height:13.79px;color:#000;white-space:pre;">0</div><div style="position:absolute;left:993px;top:383.94px;font-size:12px;line-height:13.79px;color:#000;white-space:pre;">K2-dB</div><div style="position:absolute;left:1030px;top:381px;width:44px;height:20px;background:#fff;border-top:1px solid #a0a0a0;border-left:1px solid #a0a0a0;border-right:1px solid #fff;border-bottom:1px solid #fff;box-sizing:border-box;"></div><div style="position:absolute;left:1031px;top:382px;width:42px;height:18px;border-top:1px solid #696969;border-left:1px solid #696969;border-right:1px solid #e3e3e3;border-bottom:1px solid #e3e3e3;box-sizing:border-box;"></div><div style="position:absolute;left:1055px;top:383px;width:17px;height:16px;background:#f0f0f0;border-top:1px solid #fff;border-left:1px solid #fff;border-right:1px solid #696969;border-bottom:1px solid #696969;box-sizing:border-box;"></div><div style="position:absolute;left:1056px;top:384px;width:15px;height:14px;border-top:1px solid #e3e3e3;border-left:1px solid #e3e3e3;border-right:1px solid #a0a0a0;border-bottom:1px solid #a0a0a0;box-sizing:border-box;"></div><svg style="position:absolute;left:1055px;top:383px" width="17" height="16"><path d="M5.0 6.0 L12.0 6.0 L8.5 10.0Z" fill="#000"/></svg><div style="position:absolute;left:1034px;top:385.94px;font-size:12px;line-height:13.79px;color:#000;white-space:pre;">0</div><div style="position:absolute;left:968px;top:408.94px;font-size:12px;line-height:13.79px;color:#000;white-space:pre;">Kursor #</div><div style="position:absolute;left:1030px;top:406px;width:44px;height:20px;background:#fff;border-top:1px solid #a0a0a0;border-left:1px solid #a0a0a0;border-right:1px solid #fff;border-bottom:1px solid #fff;box-sizing:border-box;"></div><div style="position:absolute;left:1031px;top:407px;width:42px;height:18px;border-top:1px solid #696969;border-left:1px solid #696969;border-right:1px solid #e3e3e3;border-bottom:1px solid #e3e3e3;box-sizing:border-box;"></div><div style="position:absolute;left:1055px;top:408px;width:17px;height:16px;background:#f0f0f0;border-top:1px solid #fff;border-left:1px solid #fff;border-right:1px solid #696969;border-bottom:1px solid #696969;box-sizing:border-box;"></div><div style="position:absolute;left:1056px;top:409px;width:15px;height:14px;border-top:1px solid #e3e3e3;border-left:1px solid #e3e3e3;border-right:1px solid #a0a0a0;border-bottom:1px solid #a0a0a0;box-sizing:border-box;"></div><svg style="position:absolute;left:1055px;top:408px" width="17" height="16"><path d="M5.0 6.0 L12.0 6.0 L8.5 10.0Z" fill="#000"/></svg><div style="position:absolute;left:1034px;top:410.94px;font-size:12px;line-height:13.79px;color:#000;white-space:pre;">1</div><div style="position:absolute;left:873px;top:433.94px;font-size:12px;line-height:13.79px;color:#1a8a1a;white-space:pre;">Praca</div><div style="position:absolute;left:966px;top:433.94px;font-size:12px;line-height:13.79px;color:#000;white-space:pre;">Postęp</div><div style="position:absolute;left:1020px;top:435px;width:56px;height:10px;background:#f6f6f6;border-top:1px solid #a0a0a0;border-left:1px solid #a0a0a0;border-right:1px solid #fff;border-bottom:1px solid #fff;"></div><div style="position:absolute;left:1023px;top:438px;width:7px;height:4px;background:#0078d7;"></div><div style="position:absolute;left:1032px;top:438px;width:7px;height:4px;background:#0078d7;"></div><div style="position:absolute;left:1041px;top:438px;width:7px;height:4px;background:#0078d7;"></div><div style="position:absolute;left:1050px;top:438px;width:7px;height:4px;background:#0078d7;"></div><div style="position:absolute;left:1059px;top:438px;width:7px;height:4px;background:#0078d7;"></div><div style="position:absolute;left:1068px;top:438px;width:6px;height:4px;background:#0078d7;"></div><div style="position:absolute;left:1095px;top:119px;width:176px;height:599px;background:#fff;border-top:1px solid #a0a0a0;border-left:1px solid #a0a0a0;border-right:1px solid #fff;border-bottom:1px solid #fff;box-sizing:border-box;"></div><div style="position:absolute;left:1096px;top:120px;width:174px;height:597px;border-top:1px solid #696969;border-left:1px solid #696969;border-right:1px solid #e3e3e3;border-bottom:1px solid #e3e3e3;box-sizing:border-box;"></div><div style="position:absolute;left:1100px;top:125.14px;font-size:10.9px;line-height:12.52px;color:#000;white-space:pre;">no_label</div><div style="position:absolute;left:1100px;top:151.14px;font-size:10.9px;line-height:12.52px;color:#000;white-space:pre;">Kursor 1:</div><div style="position:absolute;left:1100px;top:164.14px;font-size:10.9px;line-height:12.52px;color:#000;white-space:pre;">9.009990 MHz</div><div style="position:absolute;left:1100px;top:177.14px;font-size:10.9px;line-height:12.52px;color:#000;white-space:pre;">Kanał 1: -82.47dB</div><div style="position:absolute;left:1100px;top:190.14px;font-size:10.9px;line-height:12.52px;color:#000;white-space:pre;">-----------------------</div><div style="position:absolute;left:1100px;top:203.14px;font-size:10.9px;line-height:12.52px;color:#000;white-space:pre;">Kanał 1</div><div style="position:absolute;left:1100px;top:216.14px;font-size:10.9px;line-height:12.52px;color:#000;white-space:pre;">max :-1.85dB 9.001302MHz</div><div style="position:absolute;left:1100px;top:229.14px;font-size:10.9px;line-height:12.52px;color:#000;white-space:pre;">min :-84.35dB 9.005784MHz</div><div style="position:absolute;left:1100px;top:242.14px;font-size:10.9px;line-height:12.52px;color:#000;white-space:pre;">B3dB : 2.386 kHz</div><div style="position:absolute;left:1100px;top:255.14px;font-size:10.9px;line-height:12.52px;color:#000;white-space:pre;">Q: 3772.99</div><div style="position:absolute;left:1100px;top:268.14px;font-size:10.9px;line-height:12.52px;color:#000;white-space:pre;">f1: 9.000392 MHz</div><div style="position:absolute;left:1100px;top:281.14px;font-size:10.9px;line-height:12.52px;color:#000;white-space:pre;">fm: 9.001585 MHz</div><div style="position:absolute;left:1100px;top:294.14px;font-size:10.9px;line-height:12.52px;color:#000;white-space:pre;">f2: 9.002778 MHz</div><div style="position:absolute;left:1100px;top:307.14px;font-size:10.9px;line-height:12.52px;color:#000;white-space:pre;">-----------------------</div><div style="position:absolute;left:0px;top:770px;width:1280px;height:30px;background:#001208;"></div><svg style="left:10px;top:777px" width="17" height="17"><path d="M0 2.3 L7 1.3 L7 7.6 L0 7.6Z M8 1.1 L17 0 L17 7.6 L8 7.6Z M0 8.6 L7 8.6 L7 14.9 L0 13.9Z M8 8.6 L17 8.6 L17 16.5 L8 15.2Z" fill="#fff"/></svg><svg style="left:46px;top:777px" width="17" height="17"><circle cx="10.5" cy="6.3" r="5.3" stroke="#fff" stroke-width="1.3" fill="none"/><line x1="6.8" y1="10" x2="0.8" y2="16" stroke="#fff" stroke-width="1.5"/></svg><svg style="left:80px;top:778px" width="21" height="15"><rect x="4.5" y="0.5" width="12" height="14" stroke="#fff" fill="none"/><path d="M2.5 1.5 L0.5 1.5 L0.5 13.5 L2.5 13.5 M18.5 1.5 L20.5 1.5 L20.5 13.5 L18.5 13.5" stroke="#fff" fill="none"/></svg><svg style="left:121px;top:777px" width="16" height="17"><path d="M1 9 Q1 1 8 1 Q15 1 15 8 L15 10 L5 10 Q5.5 14 9.5 14 Q12 14 14.5 12.5 L14.5 15.5 Q12 17 9 17 Q2 16.5 2 11 Q2 7 5 4 Q4.5 6.5 5 7.5 L11 7.5 Q11 4 8 4 Q4 4 1 9Z" fill="#0a7ad8"/></svg><svg style="left:158px;top:778px" width="17" height="15"><path d="M0 1 L6 1 L8 3 L16 3 L16 14 L0 14Z" fill="#f5cf67"/><rect x="0" y="4" width="16" height="10" fill="#ffe596"/><rect x="1" y="1.5" width="5" height="1" fill="#fff"/><path d="M4.5 14 L4.5 8.5 L11.5 8.5 L11.5 14 L9.5 14 L9.5 10.5 L6.5 10.5 L6.5 14Z" fill="#2b8ee8"/></svg><svg style="left:196px;top:777px" width="15" height="17"><path d="M4.5 4 Q4.5 0.8 7.5 0.8 Q10.5 0.8 10.5 4" stroke="#fff" fill="none"/><path d="M0.5 4 L14.5 4 L14.5 16 L0.5 15Z" fill="#fff"/><path d="M3.5 7 L7 7 L7 10 L3.5 10Z M8 7 L11.5 7 L11.5 10 L8 10Z M3.5 11 L7 11 L7 14 L3.5 14Z M8 11 L11.5 11 L11.5 14 L8 14Z" fill="#001208"/></svg><svg style="left:232px;top:777px" width="16" height="16"><rect x="0.5" y="0.5" width="15" height="15" fill="#7ab4e4" stroke="#a8d0f0"/><circle cx="8" cy="8" r="6" fill="#f08a10"/><path d="M6 4.5 L11.5 8 L6 11.5Z" fill="#fff"/></svg><svg style="left:269px;top:777px" width="16" height="16"><defs><linearGradient id="ffo" x1="1" y1="0" x2="0" y2="1"><stop offset="0" stop-color="#ffd820"/><stop offset="0.4" stop-color="#f5901a"/><stop offset="1" stop-color="#e04020"/></linearGradient><radialGradient id="ffb" cx="0.5" cy="0.2" r="0.8"><stop offset="0" stop-color="#60c8f8"/><stop offset="1" stop-color="#1a3a8a"/></radialGradient></defs><circle cx="8" cy="8" r="7" fill="url(#ffo)"/><circle cx="8.8" cy="7" r="4.8" fill="url(#ffb)"/><path d="M1.5 5 L2.5 1.5 L4.5 4 L7 3.5 L5.5 6 L6.5 9 L10 10.5 Q7 12.5 4 10.5 Q1.5 8.5 1.5 5Z" fill="#ee6a1c"/><path d="M13 3 Q15.5 6 14.5 10" stroke="#fff8c0" stroke-width="1.2" fill="none" opacity="0.7"/></svg><svg style="left:308px;top:777px" width="13" height="17"><rect x="0" y="0" width="13" height="17" fill="#fff"/><rect x="2" y="2" width="9" height="3" fill="#001208"/><g fill="#001208"><rect x="2" y="7" width="2" height="2"/><rect x="5.5" y="7" width="2" height="2"/><rect x="9" y="7" width="2" height="2"/><rect x="2" y="10" width="2" height="2"/><rect x="5.5" y="10" width="2" height="2"/><rect x="9" y="10" width="2" height="2"/><rect x="2" y="13" width="2" height="2"/><rect x="5.5" y="13" width="2" height="2"/><rect x="9" y="13" width="2" height="2"/></g></svg><svg style="left:342px;top:776px" width="18" height="18"><g stroke="#ff1a1a" stroke-width="2"><line x1="9" y1="0" x2="9" y2="18"/><line x1="0" y1="9" x2="18" y2="9"/><line x1="2.5" y1="2.5" x2="15.5" y2="15.5"/><line x1="15.5" y1="2.5" x2="2.5" y2="15.5"/></g><circle cx="9" cy="9" r="5.5" fill="#ffe000" stroke="#ff1a1a"/><circle cx="7" cy="7.5" r="0.8" fill="#000"/><circle cx="11" cy="7.5" r="0.8" fill="#000"/><path d="M6 10 Q9 13 12 10" stroke="#000" fill="none" stroke-width="0.9"/></svg><div style="position:absolute;left:370px;top:770px;width:36px;height:30px;background:#3a403a;"></div><div style="position:absolute;left:402px;top:770px;width:4px;height:30px;background:#2a302a;"></div><div style="position:absolute;left:370px;top:798px;width:36px;height:2px;background:#7aaae0;"></div><svg style="left:380px;top:777px" width="16" height="16"><rect x="0.5" y="0.5" width="15" height="15" fill="#ffff00" stroke="#909070"/><path d="M1.5 13.5 L3 12.5 L4 13.5 L5 5 L6 3 L10 3 L11 5 L12 13.5 L13 12.5 L14.5 13.5" stroke="#ff3030" fill="none" stroke-width="0.8" stroke-dasharray="1 1.5"/></svg><svg style="left:1062px;top:781px" width="13" height="8"><path d="M0.5 7.5 L6.5 1 L12.5 7.5" stroke="#fff" stroke-width="1.2" fill="none"/></svg><svg style="left:1087px;top:779px" width="14" height="14"><g stroke="#fff" fill="none" stroke-width="1.1"><path d="M1 13 Q1 1 13 1"/><path d="M4 13 Q4 4 13 4"/><path d="M7 13 Q7 7 13 7"/></g><circle cx="11.5" cy="11.5" r="1.6" fill="#fff"/></svg><svg style="left:1108px;top:779px" width="17" height="14"><path d="M0.5 4.5 L3.5 4.5 L7.5 0.5 L7.5 13.5 L3.5 9.5 L0.5 9.5Z" stroke="#fff" fill="none"/><path d="M10 4 Q11.5 7 10 10 M12.5 2 Q15 7 12.5 12" stroke="#fff" fill="none"/><path d="M15 1 Q17.5 7 15 13" stroke="#888" fill="none"/></svg><svg style="left:1132px;top:779px" width="17" height="14"><path d="M1.5 1 L1.5 4 M4.5 1 L4.5 4 M0.5 4.5 L5.5 4.5 L5.5 7 Q3 9 3 11 M3 11 L3 13" stroke="#fff" fill="none"/><rect x="5.5" y="5.5" width="10" height="7" stroke="#fff" fill="none"/><rect x="6.5" y="6.5" width="8" height="5" fill="#fff" fill-opacity="0.85"/><rect x="15.5" y="7.5" width="1.5" height="3" fill="#fff"/></svg><svg style="left:1239px;top:777px" width="17" height="17"><path d="M0.5 0.5 L16.5 0.5 L16.5 13.5 L10 13.5 L8 16 L6 13.5 L0.5 13.5Z" stroke="#fff" fill="none" stroke-width="1.1"/></svg><div style="position:absolute;left:1160px;top:780.04px;font-size:11px;line-height:12.64px;color:#e8e8e8;white-space:pre;">POL</div><div style="position:absolute;left:1194px;top:780.04px;font-size:11px;line-height:12.64px;color:#e8e8e8;white-space:pre;">21:02</div><div style="position:absolute;left:1275px;top:770px;width:1px;height:30px;background:#555;"></div></body></html>
